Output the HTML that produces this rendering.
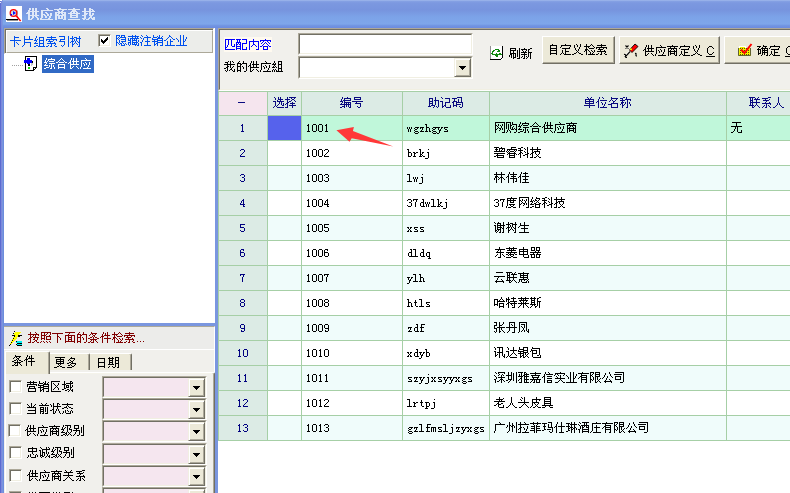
<!DOCTYPE html><html><head><meta charset="utf-8"><style>
*{margin:0;padding:0;box-sizing:border-box}
html,body{width:790px;height:493px;overflow:hidden;background:#f1f0ec;font-family:"Liberation Sans",sans-serif;font-size:12px;color:#000}
.a{position:absolute}
.t{position:absolute;white-space:nowrap;line-height:12px;font-size:12px}
.m{font-family:"Liberation Mono",monospace;font-size:11px;letter-spacing:-0.6px}
.btn{position:absolute;background:#ece9d8;border-top:1px solid #fff;border-left:1px solid #fff;border-right:1px solid #716f64;border-bottom:1px solid #716f64;box-shadow:inset -1px -1px 0 #aca899}
.sunk{position:absolute;border-top:1px solid #aca899;border-left:1px solid #aca899;border-right:1px solid #fff;border-bottom:1px solid #fff}
.sunk>.in{position:absolute;left:0;top:0;right:0;bottom:0;border-top:1px solid #716f64;border-left:1px solid #716f64;border-right:1px solid #f1efe2;border-bottom:1px solid #f1efe2}
.dd{position:absolute;background:#ece9d8;border-top:1px solid #f1efe2;border-left:1px solid #f1efe2;border-right:1px solid #716f64;border-bottom:1px solid #716f64;box-shadow:inset 1px 1px 0 #fff,inset -1px -1px 0 #aca899}
.tri{position:absolute;width:7px;height:4px;background:linear-gradient(#000,#000) 0 0/7px 1px no-repeat,linear-gradient(#000,#000) 1px 1px/5px 1px no-repeat,linear-gradient(#000,#000) 2px 2px/3px 1px no-repeat,linear-gradient(#000,#000) 3px 3px/1px 1px no-repeat}
.cb{position:absolute;width:13px;height:13px;background:#fff;border-top:1px solid #aca899;border-left:1px solid #aca899;border-right:1px solid #fff;border-bottom:1px solid #fff;box-shadow:inset 1px 1px 0 #716f64, inset -1px -1px 0 #f1efe2}
</style></head><body>
<div class="a" style="left:0;top:0;width:790px;height:28px;background:linear-gradient(#a8bfee 0px,#86a2e4 1px,#7c98e0 3px,#7794de 10px,#7ca3e8 17px,#7ea6ea 24px,#7296e2 25.5px,#6c8ade 28px)"></div>
<div class="a" style="left:0;top:28px;width:4px;height:465px;background:linear-gradient(90deg,#5b6bd0 0,#5b6bd0 1px,#7d88dc 1px,#7d88dc 2px,#7896de 2px,#7896de 3px,#6e8cdc 3px)"></div>
<div class="a" style="left:0;top:0;width:3px;height:28px;background:linear-gradient(90deg,#5b6bd0 0,#5b6bd0 1px,#7d88dc 1px,#7d88dc 2px,#7a95df 2px);opacity:0.85"></div>
<div class="a" style="left:0;top:0;width:2px;height:1px;background:#fff"></div><div class="a" style="left:0;top:2px;width:1px;height:1px;background:#e8ecf8"></div>
<div class="a" style="left:6px;top:6px;width:16px;height:16px;background:#fff"></div>
<svg class="a" style="left:6px;top:6px" width="16" height="16"><rect x="0" y="0" width="16" height="16" fill="#fff"/><rect x="0" y="13" width="12" height="1" fill="#000"/><rect x="1" y="14" width="11" height="1" fill="#909090"/><path d="M11 5 L12 4 L12 11 L11 11Z" fill="#b0b8b8"/><circle cx="7.5" cy="7" r="3.3" fill="#d0dde0" stroke="#ff0000" stroke-width="1.3"/><path d="M7 5 L10 7 L7 9Z" fill="#0010ff"/><rect x="4.5" y="8" width="1.5" height="1.5" fill="#0010ff"/><line x1="10.2" y1="9.8" x2="14.6" y2="15" stroke="#ff0000" stroke-width="1.5"/></svg>
<div class="a" style="left:214px;top:28px;width:1px;height:26px;background:#fff"></div>
<div class="a" style="left:4px;top:28px;width:210px;height:26px;background:#ecedea;border-top:1px solid #aca899;border-left:1px solid #aca899;border-right:1px solid #fff;border-bottom:1px solid #fff"><div class="a" style="left:0;top:0;right:0;bottom:0;border-top:1px solid #716f64;border-left:1px solid #716f64;"><div class="a" style="left:0;top:0;right:0;bottom:0;border-top:1px solid #fff;border-left:1px solid #fff;border-right:1px solid #aca899;border-bottom:1px solid #aca899"></div></div></div>
<div class="cb" style="left:98px;top:34px"></div>
<svg class="a" style="left:0;top:0" width="790" height="493" shape-rendering="crispEdges"><path d="M101 39h1v3h-1zM102 40h1v3h-1zM103 41h1v3h-1zM104 40h1v3h-1zM105 39h1v3h-1zM106 38h1v3h-1zM107 37h1v3h-1z" fill="#000"/></svg>
<div class="a" style="left:4px;top:54px;width:211px;height:269px;background:#fff"></div>
<div class="a" style="left:12px;top:65px;width:11px;height:1px;background-image:linear-gradient(90deg,#a0a0a0 1px,transparent 1px);background-size:2px 1px"></div>
<svg class="a" style="left:24px;top:55px" width="14" height="17" shape-rendering="crispEdges"><path d="M1 1h12v11h-1v1h-1v1h-1v1h-1v1H1z" fill="#fff"/><path d="M1 1h12v1H1z M1 1h1v15H1z M12 1h1v11h-1z M1 15h9v1H1z M9 15h1v-1h1v-1h1v-1h1v1h-1v1h-1v1h-1v1H9z M9 12h3v1h-2v2H9z" fill="#000"/><path d="M7 6h1v1h1v3h-1v1H7z" fill="#c8c8c8"/><path d="M0 5h8v3H0z M3 3h3v6H3z" fill="#0000ff"/><path d="M8 6h1v2H8z M4 9h2v2H4z" fill="#000"/><path d="M4 12h2v2H4z" fill="#10e010"/></svg>
<div class="a" style="left:42px;top:55px;width:52px;height:18px;background:#316ac5"></div>
<div class="a" style="left:4px;top:323px;width:211px;height:3px;background:#7a96df"></div>
<div class="a" style="left:215px;top:28px;width:3px;height:465px;background:#7a96df"></div>
<div class="a" style="left:4px;top:326px;width:211px;height:167px;background:#f1f0ec;border-top:1px solid #aca899;border-right:1px solid #fff"></div>
<div class="a" style="left:4px;top:327px;width:210px;height:23px;background:#ececea;border-bottom:1px solid #fff"></div>
<svg class="a" style="left:8px;top:329px" width="16" height="20" shape-rendering="crispEdges"><path d="M7 3h6v1h-6zM6 4h6v1h-6zM6 5h5v1h-5zM6 6h4v1h-4zM6 7h4v1h-4zM5 8h4v1h-4zM5 9h4v1h-4zM4 10h4v1h-4zM4 11h3v1h-3zM3 12h3v1h-3zM3 13h2v1h-2zM2 14h2v1h-2zM2 15h1v1h-1z" fill="#ffff00"/><path d="M6 2h1v1h-1zM5 4h1v1h-1zM4 6h1v1h-1zM5 6h1v1h-1zM6 6h1v1h-1zM6 7h1v1h-1zM5 9h1v1h-1zM4 11h1v1h-1zM3 13h1v1h-1zM2 15h1v1h-1zM1 16h1v1h-1zM10 6h1v1h-1zM11 6h1v1h-1zM12 6h1v1h-1zM13 6h1v1h-1zM10 7h1v1h-1zM11 7h1v1h-1z" fill="#000"/><path d="M8 12h6v2h-6z M8 15h6v1h-6z" fill="#00f0f0"/><path d="M9 14h5v1h-5z M9 16h5v1h-5z M8 12h1v1h-1z M8 15h1v1h-1z" fill="#000"/></svg>
<div class="a" style="left:137px;top:341px;width:1px;height:1px;background:#800000;box-shadow:3px 0 0 #800000,6px 0 0 #800000"></div>
<div class="a" style="left:5px;top:372px;width:210px;height:121px;background:#f1f0ec;border-top:1px solid #fff;border-left:1px solid #fff;border-right:1px solid #716f64;box-shadow:inset -1px 0 0 #aca899,inset 0 1px 0 #f4f3ea;border-top-right-radius:2px"></div>
<div class="a" style="left:50px;top:353px;width:40px;height:17px;background:#ece9d8;border-top:1px solid #fff;border-right:1px solid #716f64;box-shadow:inset -1px 0 0 #aca899;border-top-right-radius:2px"></div>
<div class="a" style="left:90px;top:353px;width:42px;height:17px;background:#ece9d8;border-top:1px solid #fff;border-right:1px solid #716f64;box-shadow:inset -1px 0 0 #aca899;border-top-right-radius:2px"></div>
<div class="a" style="left:5px;top:351px;width:45px;height:23px;background:#ece9d8;border-top:1px solid #fff;border-left:1px solid #fff;border-right:1px solid #716f64;box-shadow:inset -1px 0 0 #aca899;border-top-right-radius:2px"></div>
<div class="cb" style="left:9px;top:380px"></div>
<div class="sunk" style="left:102px;top:376px;width:105px;height:22px;background:#f5e6ef"><div class="in"></div></div>
<div class="dd" style="left:188px;top:378px;width:17px;height:19px"></div>
<div class="tri" style="left:193px;top:386px"></div>
<div class="cb" style="left:9px;top:402px"></div>
<div class="sunk" style="left:102px;top:398px;width:105px;height:22px;background:#f5e6ef"><div class="in"></div></div>
<div class="dd" style="left:188px;top:400px;width:17px;height:19px"></div>
<div class="tri" style="left:193px;top:408px"></div>
<div class="cb" style="left:8px;top:424px"></div>
<div class="sunk" style="left:102px;top:420px;width:105px;height:22px;background:#f5e6ef"><div class="in"></div></div>
<div class="dd" style="left:188px;top:422px;width:17px;height:19px"></div>
<div class="tri" style="left:193px;top:430px"></div>
<div class="cb" style="left:9px;top:446px"></div>
<div class="sunk" style="left:102px;top:443px;width:105px;height:22px;background:#f5e6ef"><div class="in"></div></div>
<div class="dd" style="left:188px;top:445px;width:17px;height:19px"></div>
<div class="tri" style="left:193px;top:453px"></div>
<div class="cb" style="left:9px;top:469px"></div>
<div class="sunk" style="left:102px;top:465px;width:105px;height:22px;background:#f5e6ef"><div class="in"></div></div>
<div class="dd" style="left:188px;top:467px;width:17px;height:19px"></div>
<div class="tri" style="left:193px;top:475px"></div>
<div class="cb" style="left:9px;top:491px"></div>
<div class="sunk" style="left:102px;top:487px;width:105px;height:22px;background:#f5e6ef"><div class="in"></div></div>
<div class="dd" style="left:188px;top:489px;width:17px;height:19px"></div>
<div class="tri" style="left:193px;top:497px"></div>
<div class="a" style="left:218px;top:28px;width:590px;height:63px;background:#f1f0ec;border-top:1px solid #aca899;border-left:1px solid #aca899;border-bottom:1px solid #fff"><div class="a" style="left:0;top:0;right:0;bottom:0;border-top:1px solid #716f64;border-left:1px solid #716f64;border-bottom:1px solid #f1efe2"></div></div>
<div class="a" style="left:224px;top:37px;width:48px;height:15px;background:#fffaf0"></div>
<div class="sunk" style="left:298px;top:33px;width:175px;height:22px;background:#fff"><div class="in"></div></div>
<div class="sunk" style="left:298px;top:56px;width:175px;height:23px;background:#fff"><div class="in"></div></div>
<div class="dd" style="left:454px;top:58px;width:17px;height:19px"></div>
<div class="tri" style="left:459px;top:66px"></div>
<svg class="a" style="left:490px;top:46px" width="13" height="14" shape-rendering="crispEdges"><rect x="0" y="0" width="13" height="14" fill="#fff"/><rect x="0" y="0" width="1" height="14" fill="#909090"/><path d="M12 0h1v12h-1z M0 13h11v1H0z M11 12h1v1h-1z" fill="#000"/><path d="M5 3h1v1h-1zM6 3h1v1h-1zM7 3h1v1h-1zM8 3h1v1h-1zM3 4h1v1h-1zM4 4h1v1h-1zM8 4h1v1h-1zM9 4h1v1h-1zM2 5h1v1h-1zM3 5h1v1h-1zM7 5h1v1h-1zM8 5h1v1h-1zM9 5h1v1h-1zM2 6h1v1h-1zM1 7h1v1h-1zM2 7h1v1h-1zM6 7h1v1h-1zM9 7h1v1h-1zM10 7h1v1h-1zM2 8h1v1h-1zM3 8h1v1h-1zM4 8h1v1h-1zM5 8h1v1h-1zM6 8h1v1h-1zM7 8h1v1h-1zM8 8h1v1h-1zM9 8h1v1h-1zM10 8h1v1h-1zM11 8h1v1h-1zM5 9h1v1h-1zM6 9h1v1h-1zM7 9h1v1h-1zM6 10h1v1h-1zM7 10h1v1h-1z" fill="#108810"/></svg>
<div class="btn" style="left:542px;top:36px;width:73px;height:28px"></div>
<div class="btn" style="left:619px;top:36px;width:101px;height:28px"></div>
<svg class="a" style="left:621px;top:40px" width="20" height="20"><path d="M4.5 5.5 L7.5 8.5 M7.5 5.5 L4.5 8.5" stroke="#000" stroke-width="1.1"/><path d="M9 11.5 L4 17" stroke="#000" stroke-width="1.3"/><path d="M8.2 11 L3.6 16" stroke="#fff" stroke-width="0.8"/><path d="M3 14.5 Q5 14 4.5 16 Q4 17.5 6 17.5" stroke="#000" stroke-width="1.1" fill="none"/><path d="M8.5 10 L14 4 L17 6.5 L11 12.5 Z" fill="#ff0000" stroke="#000" stroke-width="0.9"/><rect x="9" y="8.5" width="2" height="1.6" fill="#f0f000"/><path d="M14 13.5 Q15.5 13 15 14.5 Q14.5 16 16 16" stroke="#000" stroke-width="1.1" fill="none"/></svg>
<svg class="a" style="left:0;top:0" width="790" height="493" shape-rendering="crispEdges"><path d="M709 46h1v1h-1zM710 46h1v1h-1zM711 46h1v1h-1zM708 47h1v1h-1zM712 47h1v1h-1zM707 48h1v1h-1zM713 48h1v1h-1zM707 49h1v1h-1zM707 50h1v1h-1zM707 51h1v1h-1zM707 52h1v1h-1zM713 52h1v1h-1zM708 53h1v1h-1zM712 53h1v1h-1zM709 54h1v1h-1zM710 54h1v1h-1zM711 54h1v1h-1zM706 56h9v1h-9z" fill="#000"/></svg>
<div class="btn" style="left:724px;top:36px;width:80px;height:28px"></div>
<svg class="a" style="left:734px;top:40px" width="20" height="20"><defs><pattern id="chk" width="2" height="2" patternUnits="userSpaceOnUse"><rect width="2" height="2" fill="#f4f400"/><rect width="1" height="1" fill="#505000"/></pattern></defs><rect x="4" y="8" width="13" height="8" fill="url(#chk)"/><path d="M4.5 8 V15.5 H16.5 V8" fill="none" stroke="#606030" stroke-width="1"/><rect x="5" y="6" width="7" height="2" fill="#fff"/><rect x="6" y="7" width="5" height="1" fill="#f0f000"/><path d="M7 9.5 L10.5 13 L17.5 4" stroke="#ff0000" stroke-width="2" fill="none"/></svg>
<svg class="a" style="left:0;top:0" width="790" height="493" shape-rendering="crispEdges"><path d="M788 46h1v1h-1zM789 46h1v1h-1zM790 46h1v1h-1zM787 47h1v1h-1zM791 47h1v1h-1zM786 48h1v1h-1zM792 48h1v1h-1zM786 49h1v1h-1zM786 50h1v1h-1zM786 51h1v1h-1zM786 52h1v1h-1zM792 52h1v1h-1zM787 53h1v1h-1zM791 53h1v1h-1zM788 54h1v1h-1zM789 54h1v1h-1zM790 54h1v1h-1zM785 56h9v1h-9z" fill="#000"/></svg>
<div class="a" style="left:218px;top:91px;width:572px;height:402px;background:#fff"></div>
<div class="a" style="left:218px;top:91px;width:49px;height:25px;background:#f5e5ee"></div>
<div class="a" style="left:267px;top:91px;width:34px;height:25px;background:#dcebe5"></div>
<div class="a" style="left:301px;top:91px;width:101px;height:25px;background:#dcebe5"></div>
<div class="a" style="left:402px;top:91px;width:87px;height:25px;background:#dcebe5"></div>
<div class="a" style="left:489px;top:91px;width:237px;height:25px;background:#dcebe5"></div>
<div class="a" style="left:726px;top:91px;width:84px;height:25px;background:#dcebe5"></div>
<div class="a" style="left:218px;top:115px;width:49px;height:25px;background:#dcebe5"></div>
<div class="a" style="left:267px;top:115px;width:543px;height:25px;background:#c0f7da"></div>
<div class="a" style="left:268px;top:116px;width:33px;height:24px;background:#5662ec"></div>
<div class="a" style="left:218px;top:140px;width:49px;height:25px;background:#dcebe5"></div>
<div class="a" style="left:267px;top:140px;width:543px;height:25px;background:#ffffff"></div>
<div class="a" style="left:218px;top:165px;width:49px;height:25px;background:#dcebe5"></div>
<div class="a" style="left:267px;top:165px;width:543px;height:25px;background:#f0fcfb"></div>
<div class="a" style="left:218px;top:190px;width:49px;height:25px;background:#dcebe5"></div>
<div class="a" style="left:267px;top:190px;width:543px;height:25px;background:#ffffff"></div>
<div class="a" style="left:218px;top:215px;width:49px;height:25px;background:#dcebe5"></div>
<div class="a" style="left:267px;top:215px;width:543px;height:25px;background:#f0fcfb"></div>
<div class="a" style="left:218px;top:240px;width:49px;height:25px;background:#dcebe5"></div>
<div class="a" style="left:267px;top:240px;width:543px;height:25px;background:#ffffff"></div>
<div class="a" style="left:218px;top:265px;width:49px;height:25px;background:#dcebe5"></div>
<div class="a" style="left:267px;top:265px;width:543px;height:25px;background:#f0fcfb"></div>
<div class="a" style="left:218px;top:290px;width:49px;height:25px;background:#dcebe5"></div>
<div class="a" style="left:267px;top:290px;width:543px;height:25px;background:#ffffff"></div>
<div class="a" style="left:218px;top:315px;width:49px;height:25px;background:#dcebe5"></div>
<div class="a" style="left:267px;top:315px;width:543px;height:25px;background:#f0fcfb"></div>
<div class="a" style="left:218px;top:340px;width:49px;height:25px;background:#dcebe5"></div>
<div class="a" style="left:267px;top:340px;width:543px;height:25px;background:#ffffff"></div>
<div class="a" style="left:218px;top:365px;width:49px;height:25px;background:#dcebe5"></div>
<div class="a" style="left:267px;top:365px;width:543px;height:25px;background:#f0fcfb"></div>
<div class="a" style="left:218px;top:390px;width:49px;height:25px;background:#dcebe5"></div>
<div class="a" style="left:267px;top:390px;width:543px;height:25px;background:#ffffff"></div>
<div class="a" style="left:218px;top:415px;width:49px;height:25px;background:#dcebe5"></div>
<div class="a" style="left:267px;top:415px;width:543px;height:25px;background:#f0fcfb"></div>
<div class="a" style="left:218px;top:91px;width:1px;height:350px;background:#a6cfa6"></div>
<div class="a" style="left:267px;top:91px;width:1px;height:350px;background:#a6cfa6"></div>
<div class="a" style="left:301px;top:91px;width:1px;height:350px;background:#a6cfa6"></div>
<div class="a" style="left:402px;top:91px;width:1px;height:350px;background:#a6cfa6"></div>
<div class="a" style="left:489px;top:91px;width:1px;height:350px;background:#a6cfa6"></div>
<div class="a" style="left:726px;top:91px;width:1px;height:350px;background:#a6cfa6"></div>
<div class="a" style="left:218px;top:91px;width:592px;height:1px;background:#a6cfa6"></div>
<div class="a" style="left:218px;top:115px;width:592px;height:1px;background:#a6cfa6"></div>
<div class="a" style="left:218px;top:140px;width:592px;height:1px;background:#a6cfa6"></div>
<div class="a" style="left:218px;top:165px;width:592px;height:1px;background:#a6cfa6"></div>
<div class="a" style="left:218px;top:190px;width:592px;height:1px;background:#a6cfa6"></div>
<div class="a" style="left:218px;top:215px;width:592px;height:1px;background:#a6cfa6"></div>
<div class="a" style="left:218px;top:240px;width:592px;height:1px;background:#a6cfa6"></div>
<div class="a" style="left:218px;top:265px;width:592px;height:1px;background:#a6cfa6"></div>
<div class="a" style="left:218px;top:290px;width:592px;height:1px;background:#a6cfa6"></div>
<div class="a" style="left:218px;top:315px;width:592px;height:1px;background:#a6cfa6"></div>
<div class="a" style="left:218px;top:340px;width:592px;height:1px;background:#a6cfa6"></div>
<div class="a" style="left:218px;top:365px;width:592px;height:1px;background:#a6cfa6"></div>
<div class="a" style="left:218px;top:390px;width:592px;height:1px;background:#a6cfa6"></div>
<div class="a" style="left:218px;top:415px;width:592px;height:1px;background:#a6cfa6"></div>
<div class="a" style="left:218px;top:440px;width:592px;height:1px;background:#a6cfa6"></div>
<div class="a" style="left:238px;top:102px;width:7px;height:1px;background:#0a0a80"></div>
<svg class="a" style="left:0;top:0" width="790" height="493"><path d="M336.4 130.2 L353.9 126.9 L352.9 131.1 L393.3 146.6 L351.7 138.2 L349.5 141.7 Z" fill="#ff3838"/></svg>
<svg class="a" style="left:0;top:0" width="790" height="493" shape-rendering="crispEdges"><defs><path id="g0" d="M3 2h2v1h-2zM6 2h2v1h-2zM9 2h2v1h-2zM3 3h2v1h-2zM6 3h2v1h-2zM9 3h2v1h-2zM2 4h2v1h-2zM6 4h2v1h-2zM9 4h2v1h-2zM2 5h11v1h-11zM1 6h3v1h-3zM6 6h2v1h-2zM9 6h2v1h-2zM0 7h4v1h-4zM6 7h2v1h-2zM9 7h2v1h-2zM2 8h2v1h-2zM6 8h2v1h-2zM9 8h2v1h-2zM2 9h11v1h-11zM2 10h2v1h-2zM6 10h2v1h-2zM9 10h2v1h-2zM2 11h2v1h-2zM6 11h2v1h-2zM10 11h2v1h-2zM2 12h2v1h-2zM5 12h2v1h-2zM11 12h2v1h-2zM2 13h4v1h-4zM11 13h2v1h-2z"/><path id="g1" d="M6 2h2v1h-2zM7 3h2v1h-2zM1 4h12v1h-12zM1 5h2v1h-2zM1 6h2v1h-2zM5 6h2v1h-2zM1 7h2v1h-2zM6 7h2v1h-2zM10 7h2v1h-2zM1 8h4v1h-4zM7 8h2v1h-2zM10 8h2v1h-2zM1 9h2v1h-2zM4 9h2v1h-2zM7 9h2v1h-2zM10 9h2v1h-2zM1 10h2v1h-2zM5 10h2v1h-2zM9 10h2v1h-2zM1 11h2v1h-2zM5 11h2v1h-2zM9 11h2v1h-2zM0 12h2v1h-2zM8 12h2v1h-2zM0 13h13v1h-13z"/><path id="g2" d="M5 2h2v1h-2zM0 3h13v1h-13zM3 4h2v1h-2zM8 4h2v1h-2zM4 5h2v1h-2zM7 5h2v1h-2zM1 6h11v1h-11zM1 7h2v1h-2zM4 7h2v1h-2zM7 7h2v1h-2zM10 7h2v1h-2zM1 8h4v1h-4zM8 8h4v1h-4zM1 9h11v1h-11zM1 10h2v1h-2zM4 10h2v1h-2zM7 10h2v1h-2zM10 10h2v1h-2zM1 11h2v1h-2zM4 11h2v1h-2zM7 11h2v1h-2zM10 11h2v1h-2zM1 12h2v1h-2zM4 12h5v1h-5zM10 12h2v1h-2zM1 13h2v1h-2zM9 13h3v1h-3z"/><path id="g3" d="M5 2h2v1h-2zM0 3h12v1h-12zM4 4h4v1h-4zM3 5h6v1h-6zM2 6h2v1h-2zM5 6h2v1h-2zM8 6h2v1h-2zM0 7h12v1h-12zM2 8h2v1h-2zM8 8h2v1h-2zM2 9h8v1h-8zM2 10h2v1h-2zM8 10h2v1h-2zM2 11h8v1h-8zM0 13h12v1h-12z"/><path id="g4" d="M2 2h2v1h-2zM7 2h2v1h-2zM2 3h2v1h-2zM7 3h4v1h-4zM2 4h2v1h-2zM7 4h2v1h-2zM10 4h2v1h-2zM0 5h13v1h-13zM2 6h2v1h-2zM7 6h2v1h-2zM2 7h4v1h-4zM7 7h2v1h-2zM10 7h2v1h-2zM2 8h3v1h-3zM7 8h2v1h-2zM10 8h2v1h-2zM0 9h4v1h-4zM7 9h4v1h-4zM2 10h2v1h-2zM8 10h2v1h-2zM2 11h2v1h-2zM7 11h3v1h-3zM11 11h2v1h-2zM0 12h4v1h-4zM6 12h2v1h-2zM9 12h4v1h-4zM1 13h2v1h-2zM4 13h3v1h-3zM10 13h3v1h-3z"/><path id="g5" d="M4 2h1v1h-1zM4 3h5v1h-5zM4 4h1v1h-1zM4 5h1v1h-1zM0 6h11v1h-11zM4 7h1v1h-1zM4 8h1v1h-1zM6 8h1v1h-1zM4 9h1v1h-1zM7 9h1v1h-1zM4 10h1v1h-1zM8 10h1v1h-1zM4 11h1v1h-1zM4 12h1v1h-1z"/><path id="g6" d="M2 2h1v1h-1zM7 2h1v1h-1zM2 3h1v1h-1zM7 3h1v1h-1zM2 4h1v1h-1zM7 4h1v1h-1zM2 5h9v1h-9zM2 6h1v1h-1zM2 7h1v1h-1zM2 8h7v1h-7zM2 9h1v1h-1zM8 9h1v1h-1zM2 10h1v1h-1zM8 10h1v1h-1zM1 11h1v1h-1zM8 11h1v1h-1zM0 12h1v1h-1zM8 12h1v1h-1z"/><path id="g7" d="M2 2h1v1h-1zM2 3h1v1h-1zM5 3h5v1h-5zM1 4h1v1h-1zM5 4h1v1h-1zM9 4h1v1h-1zM1 5h1v1h-1zM3 5h1v1h-1zM5 5h1v1h-1zM9 5h1v1h-1zM0 6h3v1h-3zM5 6h5v1h-5zM2 7h1v1h-1zM5 7h1v1h-1zM9 7h1v1h-1zM1 8h1v1h-1zM5 8h1v1h-1zM9 8h1v1h-1zM0 9h4v1h-4zM5 9h5v1h-5zM5 10h1v1h-1zM9 10h1v1h-1zM2 11h2v1h-2zM5 11h1v1h-1zM9 11h1v1h-1zM0 12h2v1h-2zM4 12h7v1h-7z"/><path id="g8" d="M5 2h1v1h-1zM1 3h9v1h-9zM5 4h1v1h-1zM0 5h11v1h-11zM0 6h1v1h-1zM3 6h1v1h-1zM7 6h1v1h-1zM10 6h1v1h-1zM2 7h5v1h-5zM4 8h1v1h-1zM8 8h1v1h-1zM1 9h9v1h-9zM5 10h1v1h-1zM9 10h1v1h-1zM2 11h1v1h-1zM5 11h1v1h-1zM8 11h1v1h-1zM0 12h2v1h-2zM4 12h2v1h-2zM9 12h2v1h-2z"/><path id="g9" d="M1 2h6v1h-6zM10 2h1v1h-1zM6 3h1v1h-1zM10 3h1v1h-1zM6 4h1v1h-1zM10 4h1v1h-1zM2 5h5v1h-5zM10 5h1v1h-1zM2 6h1v1h-1zM10 6h1v1h-1zM1 7h6v1h-6zM10 7h1v1h-1zM6 8h1v1h-1zM10 8h1v1h-1zM6 9h1v1h-1zM10 9h1v1h-1zM6 10h1v1h-1zM10 10h1v1h-1zM3 11h1v1h-1zM5 11h1v1h-1zM10 11h1v1h-1zM4 12h1v1h-1zM10 12h1v1h-1z"/><path id="g10" d="M2 2h1v1h-1zM9 2h1v1h-1zM2 3h1v1h-1zM4 3h3v1h-3zM9 3h1v1h-1zM0 4h4v1h-4zM6 4h5v1h-5zM2 5h1v1h-1zM4 5h1v1h-1zM6 5h1v1h-1zM9 5h1v1h-1zM2 6h1v1h-1zM4 6h1v1h-1zM6 6h1v1h-1zM9 6h1v1h-1zM1 7h3v1h-3zM5 7h1v1h-1zM7 7h1v1h-1zM9 7h1v1h-1zM0 8h1v1h-1zM2 8h1v1h-1zM5 8h1v1h-1zM8 8h2v1h-2zM2 9h1v1h-1zM4 9h1v1h-1zM6 9h1v1h-1zM9 9h1v1h-1zM2 10h2v1h-2zM7 10h1v1h-1zM9 10h1v1h-1zM2 11h1v1h-1zM9 11h1v1h-1zM2 12h1v1h-1zM8 12h2v1h-2z"/><path id="g11" d="M0 2h4v1h-4zM5 2h4v1h-4zM0 3h1v1h-1zM3 3h1v1h-1zM5 3h1v1h-1zM8 3h1v1h-1zM0 4h1v1h-1zM2 4h1v1h-1zM4 4h6v1h-6zM0 5h2v1h-2zM3 5h1v1h-1zM9 5h1v1h-1zM0 6h1v1h-1zM2 6h1v1h-1zM5 6h5v1h-5zM0 7h1v1h-1zM3 7h1v1h-1zM9 7h1v1h-1zM0 8h1v1h-1zM3 8h1v1h-1zM5 8h5v1h-5zM0 9h2v1h-2zM3 9h1v1h-1zM6 9h1v1h-1zM0 10h1v1h-1zM2 10h1v1h-1zM4 10h2v1h-2zM7 10h1v1h-1zM9 10h1v1h-1zM0 11h1v1h-1zM3 11h1v1h-1zM5 11h1v1h-1zM8 11h1v1h-1zM10 11h1v1h-1zM0 12h1v1h-1zM5 12h4v1h-4z"/><path id="g12" d="M4 2h1v1h-1zM7 2h1v1h-1zM0 3h11v1h-11zM4 4h1v1h-1zM7 4h1v1h-1zM9 4h1v1h-1zM0 5h1v1h-1zM2 5h9v1h-9zM0 6h1v1h-1zM2 6h1v1h-1zM4 6h1v1h-1zM6 6h1v1h-1zM8 6h1v1h-1zM0 7h3v1h-3zM4 7h5v1h-5zM10 7h1v1h-1zM2 8h1v1h-1zM4 8h1v1h-1zM8 8h1v1h-1zM10 8h1v1h-1zM0 9h3v1h-3zM4 9h6v1h-6zM0 10h1v1h-1zM2 10h1v1h-1zM4 10h1v1h-1zM6 10h1v1h-1zM8 10h1v1h-1zM10 10h1v1h-1zM0 11h1v1h-1zM2 11h1v1h-1zM4 11h5v1h-5zM10 11h1v1h-1zM1 12h1v1h-1zM7 12h1v1h-1zM9 12h2v1h-2z"/><path id="g13" d="M1 2h1v1h-1zM6 2h1v1h-1zM2 3h1v1h-1zM7 3h1v1h-1zM0 4h1v1h-1zM4 4h7v1h-7zM1 5h1v1h-1zM3 5h1v1h-1zM7 5h1v1h-1zM3 6h1v1h-1zM7 6h1v1h-1zM2 7h1v1h-1zM7 7h1v1h-1zM2 8h1v1h-1zM5 8h5v1h-5zM0 9h2v1h-2zM7 9h1v1h-1zM1 10h1v1h-1zM7 10h1v1h-1zM1 11h1v1h-1zM7 11h1v1h-1zM1 12h1v1h-1zM4 12h7v1h-7z"/><path id="g14" d="M1 2h1v1h-1zM7 2h1v1h-1zM1 3h1v1h-1zM5 3h1v1h-1zM7 3h1v1h-1zM10 3h1v1h-1zM1 4h4v1h-4zM6 4h2v1h-2zM9 4h1v1h-1zM0 5h1v1h-1zM5 5h6v1h-6zM0 6h6v1h-6zM10 6h1v1h-1zM2 7h1v1h-1zM5 7h6v1h-6zM0 8h6v1h-6zM10 8h1v1h-1zM2 9h1v1h-1zM5 9h6v1h-6zM2 10h1v1h-1zM4 10h2v1h-2zM10 10h1v1h-1zM2 11h2v1h-2zM5 11h1v1h-1zM10 11h1v1h-1zM2 12h1v1h-1zM5 12h1v1h-1zM8 12h3v1h-3z"/><path id="g15" d="M5 2h1v1h-1zM5 3h2v1h-2zM4 4h1v1h-1zM7 4h1v1h-1zM3 5h1v1h-1zM8 5h1v1h-1zM2 6h1v1h-1zM6 6h1v1h-1zM9 6h2v1h-2zM0 7h2v1h-2zM6 7h1v1h-1zM3 8h1v1h-1zM6 8h3v1h-3zM3 9h1v1h-1zM6 9h1v1h-1zM3 10h1v1h-1zM6 10h1v1h-1zM3 11h1v1h-1zM6 11h1v1h-1zM1 12h10v1h-10z"/><path id="g16" d="M4 2h1v1h-1zM7 2h1v1h-1zM4 3h1v1h-1zM7 3h1v1h-1zM4 4h1v1h-1zM7 4h1v1h-1zM10 4h1v1h-1zM0 5h1v1h-1zM4 5h1v1h-1zM7 5h1v1h-1zM10 5h1v1h-1zM1 6h1v1h-1zM4 6h1v1h-1zM7 6h1v1h-1zM9 6h1v1h-1zM2 7h1v1h-1zM4 7h1v1h-1zM7 7h1v1h-1zM9 7h1v1h-1zM2 8h1v1h-1zM4 8h1v1h-1zM7 8h2v1h-2zM4 9h1v1h-1zM7 9h1v1h-1zM4 10h1v1h-1zM7 10h1v1h-1zM4 11h1v1h-1zM7 11h1v1h-1zM0 12h11v1h-11z"/><path id="g17" d="M2 2h1v1h-1zM7 2h1v1h-1zM2 3h1v1h-1zM4 3h7v1h-7zM1 4h1v1h-1zM4 4h1v1h-1zM10 4h1v1h-1zM1 5h1v1h-1zM3 5h1v1h-1zM5 5h5v1h-5zM0 6h3v1h-3zM2 7h1v1h-1zM5 7h6v1h-6zM1 8h1v1h-1zM7 8h1v1h-1zM0 9h4v1h-4zM5 9h1v1h-1zM7 9h1v1h-1zM9 9h1v1h-1zM5 10h1v1h-1zM7 10h1v1h-1zM9 10h1v1h-1zM2 11h3v1h-3zM7 11h1v1h-1zM10 11h1v1h-1zM0 12h2v1h-2zM6 12h2v1h-2zM10 12h1v1h-1z"/><path id="g18" d="M5 2h1v1h-1zM4 3h1v1h-1zM6 3h1v1h-1zM3 4h1v1h-1zM7 4h1v1h-1zM2 5h1v1h-1zM8 5h1v1h-1zM0 6h2v1h-2zM3 6h5v1h-5zM9 6h2v1h-2zM2 8h7v1h-7zM2 9h1v1h-1zM8 9h1v1h-1zM2 10h1v1h-1zM8 10h1v1h-1zM2 11h7v1h-7zM2 12h1v1h-1zM8 12h1v1h-1z"/><path id="g19" d="M3 2h1v1h-1zM5 2h1v1h-1zM8 2h1v1h-1zM3 3h1v1h-1zM5 3h1v1h-1zM8 3h1v1h-1zM2 4h1v1h-1zM5 4h1v1h-1zM8 4h1v1h-1zM2 5h1v1h-1zM4 5h7v1h-7zM1 6h2v1h-2zM5 6h1v1h-1zM8 6h1v1h-1zM0 7h1v1h-1zM2 7h1v1h-1zM5 7h1v1h-1zM8 7h1v1h-1zM2 8h9v1h-9zM2 9h1v1h-1zM2 10h1v1h-1zM5 10h1v1h-1zM8 10h1v1h-1zM2 11h1v1h-1zM4 11h1v1h-1zM9 11h1v1h-1zM2 12h2v1h-2zM10 12h1v1h-1z"/><path id="g20" d="M5 2h1v1h-1zM6 3h1v1h-1zM1 4h10v1h-10zM1 5h1v1h-1zM1 6h1v1h-1zM5 6h1v1h-1zM9 6h1v1h-1zM1 7h1v1h-1zM3 7h1v1h-1zM6 7h1v1h-1zM9 7h1v1h-1zM1 8h1v1h-1zM4 8h1v1h-1zM6 8h1v1h-1zM9 8h1v1h-1zM1 9h1v1h-1zM4 9h1v1h-1zM8 9h1v1h-1zM1 10h1v1h-1zM8 10h1v1h-1zM0 11h1v1h-1zM7 11h1v1h-1zM0 12h1v1h-1zM3 12h8v1h-8z"/><path id="g21" d="M2 2h1v1h-1zM7 2h1v1h-1zM2 3h1v1h-1zM8 3h1v1h-1zM0 4h11v1h-11zM2 5h1v1h-1zM5 5h1v1h-1zM7 5h1v1h-1zM10 5h1v1h-1zM2 6h1v1h-1zM4 6h1v1h-1zM7 6h1v1h-1zM2 7h2v1h-2zM5 7h6v1h-6zM1 8h2v1h-2zM6 8h1v1h-1zM9 8h1v1h-1zM0 9h1v1h-1zM2 9h1v1h-1zM5 9h2v1h-2zM9 9h1v1h-1zM2 10h1v1h-1zM7 10h2v1h-2zM2 11h1v1h-1zM6 11h1v1h-1zM8 11h1v1h-1zM0 12h3v1h-3zM4 12h2v1h-2zM9 12h2v1h-2z"/><path id="g22" d="M1 2h10v1h-10zM1 3h1v1h-1zM4 3h1v1h-1zM7 3h1v1h-1zM10 3h1v1h-1zM1 4h1v1h-1zM4 4h1v1h-1zM6 4h1v1h-1zM10 4h1v1h-1zM1 5h5v1h-5zM9 5h1v1h-1zM1 6h1v1h-1zM4 6h1v1h-1zM6 6h5v1h-5zM1 7h1v1h-1zM4 7h1v1h-1zM6 7h1v1h-1zM10 7h1v1h-1zM1 8h4v1h-4zM6 8h1v1h-1zM10 8h1v1h-1zM1 9h1v1h-1zM4 9h1v1h-1zM6 9h5v1h-5zM1 11h1v1h-1zM3 11h1v1h-1zM6 11h1v1h-1zM9 11h1v1h-1zM0 12h1v1h-1zM4 12h1v1h-1zM7 12h1v1h-1zM10 12h1v1h-1z"/><path id="g23" d="M0 3h11v1h-11zM5 4h1v1h-1zM5 5h1v1h-1zM5 6h2v1h-2zM5 7h1v1h-1zM7 7h1v1h-1zM5 8h1v1h-1zM8 8h1v1h-1zM5 9h1v1h-1zM8 9h1v1h-1zM5 10h1v1h-1zM5 11h1v1h-1zM5 12h1v1h-1z"/><path id="g24" d="M1 2h10v1h-10zM5 3h1v1h-1zM4 4h1v1h-1zM1 5h10v1h-10zM1 6h1v1h-1zM4 6h1v1h-1zM7 6h1v1h-1zM10 6h1v1h-1zM1 7h1v1h-1zM4 7h4v1h-4zM10 7h1v1h-1zM1 8h1v1h-1zM4 8h1v1h-1zM7 8h1v1h-1zM10 8h1v1h-1zM1 9h1v1h-1zM4 9h4v1h-4zM10 9h1v1h-1zM1 10h1v1h-1zM4 10h1v1h-1zM7 10h1v1h-1zM10 10h1v1h-1zM1 11h10v1h-10zM1 12h1v1h-1zM10 12h1v1h-1z"/><path id="g25" d="M3 2h1v1h-1zM7 2h1v1h-1zM2 3h1v1h-1zM7 3h1v1h-1zM1 4h4v1h-4zM6 4h5v1h-5zM1 5h1v1h-1zM4 5h2v1h-2zM10 5h1v1h-1zM1 6h1v1h-1zM4 6h1v1h-1zM10 6h1v1h-1zM1 7h4v1h-4zM6 7h1v1h-1zM10 7h1v1h-1zM1 8h1v1h-1zM4 8h1v1h-1zM7 8h1v1h-1zM10 8h1v1h-1zM1 9h1v1h-1zM4 9h1v1h-1zM7 9h1v1h-1zM10 9h1v1h-1zM1 10h1v1h-1zM4 10h1v1h-1zM10 10h1v1h-1zM1 11h4v1h-4zM10 11h1v1h-1zM1 12h1v1h-1zM4 12h1v1h-1zM8 12h2v1h-2z"/><path id="g26" d="M3 2h1v1h-1zM3 3h6v1h-6zM2 4h1v1h-1zM4 4h1v1h-1zM7 4h1v1h-1zM1 5h1v1h-1zM5 5h2v1h-2zM4 6h1v1h-1zM6 6h1v1h-1zM2 7h2v1h-2zM5 7h1v1h-1zM7 7h2v1h-2zM0 8h2v1h-2zM5 8h1v1h-1zM9 8h2v1h-2zM2 9h7v1h-7zM3 10h1v1h-1zM5 10h1v1h-1zM7 10h1v1h-1zM2 11h1v1h-1zM5 11h1v1h-1zM8 11h1v1h-1zM0 12h2v1h-2zM3 12h3v1h-3zM9 12h1v1h-1z"/><path id="g27" d="M3 2h1v1h-1zM7 2h1v1h-1zM3 3h1v1h-1zM5 3h1v1h-1zM7 3h1v1h-1zM2 4h1v1h-1zM5 4h1v1h-1zM7 4h1v1h-1zM2 5h1v1h-1zM4 5h6v1h-6zM1 6h3v1h-3zM7 6h1v1h-1zM0 7h1v1h-1zM2 7h1v1h-1zM7 7h1v1h-1zM2 8h1v1h-1zM4 8h7v1h-7zM2 9h1v1h-1zM7 9h1v1h-1zM2 10h1v1h-1zM7 10h1v1h-1zM2 11h1v1h-1zM7 11h1v1h-1zM2 12h1v1h-1zM7 12h1v1h-1z"/><path id="g28" d="M2 2h1v1h-1zM7 2h1v1h-1zM2 3h1v1h-1zM6 3h1v1h-1zM8 3h1v1h-1zM0 4h6v1h-6zM9 4h1v1h-1zM2 5h1v1h-1zM4 5h1v1h-1zM10 5h1v1h-1zM2 6h1v1h-1zM5 6h5v1h-5zM1 7h3v1h-3zM1 8h2v1h-2zM4 8h1v1h-1zM7 8h1v1h-1zM10 8h1v1h-1zM0 9h1v1h-1zM2 9h1v1h-1zM5 9h1v1h-1zM8 9h1v1h-1zM10 9h1v1h-1zM2 10h1v1h-1zM6 10h1v1h-1zM9 10h1v1h-1zM2 11h1v1h-1zM6 11h1v1h-1zM8 11h1v1h-1zM2 12h1v1h-1zM4 12h7v1h-7z"/><path id="g29" d="M1 2h10v1h-10zM6 3h1v1h-1zM2 4h8v1h-8zM2 5h1v1h-1zM6 5h1v1h-1zM9 5h1v1h-1zM2 6h8v1h-8zM2 7h1v1h-1zM6 7h1v1h-1zM9 7h1v1h-1zM2 8h8v1h-8zM4 9h1v1h-1zM6 9h1v1h-1zM5 10h1v1h-1zM3 11h2v1h-2zM6 11h2v1h-2zM0 12h3v1h-3zM8 12h3v1h-3z"/><path id="g30" d="M5 2h1v1h-1zM4 3h5v1h-5zM3 4h1v1h-1zM8 4h1v1h-1zM2 5h1v1h-1zM4 5h1v1h-1zM7 5h1v1h-1zM5 6h2v1h-2zM3 7h2v1h-2zM6 7h1v1h-1zM1 8h2v1h-2zM5 8h5v1h-5zM4 9h1v1h-1zM9 9h1v1h-1zM2 10h2v1h-2zM5 10h1v1h-1zM8 10h1v1h-1zM6 11h2v1h-2zM1 12h5v1h-5z"/><path id="g31" d="M2 3h7v1h-7zM2 4h1v1h-1zM8 4h1v1h-1zM2 5h1v1h-1zM8 5h1v1h-1zM2 6h1v1h-1zM8 6h1v1h-1zM2 7h7v1h-7zM2 8h1v1h-1zM8 8h1v1h-1zM2 9h1v1h-1zM8 9h1v1h-1zM2 10h1v1h-1zM8 10h1v1h-1zM2 11h7v1h-7zM2 12h1v1h-1zM8 12h1v1h-1z"/><path id="g32" d="M1 2h1v1h-1zM4 2h1v1h-1zM7 2h4v1h-4zM0 3h6v1h-6zM7 3h1v1h-1zM10 3h1v1h-1zM1 4h1v1h-1zM4 4h1v1h-1zM7 4h1v1h-1zM10 4h1v1h-1zM1 5h4v1h-4zM7 5h4v1h-4zM1 6h1v1h-1zM4 6h1v1h-1zM7 6h1v1h-1zM10 6h1v1h-1zM1 7h4v1h-4zM7 7h1v1h-1zM10 7h1v1h-1zM1 8h1v1h-1zM4 8h1v1h-1zM7 8h4v1h-4zM0 9h6v1h-6zM7 9h1v1h-1zM10 9h1v1h-1zM7 10h1v1h-1zM10 10h1v1h-1zM1 11h1v1h-1zM4 11h1v1h-1zM7 11h1v1h-1zM10 11h1v1h-1zM0 12h1v1h-1zM5 12h2v1h-2zM9 12h2v1h-2z"/><path id="g33" d="M4 2h1v1h-1zM7 2h1v1h-1zM1 3h10v1h-10zM4 4h1v1h-1zM7 4h1v1h-1zM1 5h10v1h-10zM1 6h1v1h-1zM10 6h1v1h-1zM1 7h1v1h-1zM3 7h6v1h-6zM3 8h1v1h-1zM8 8h1v1h-1zM2 9h8v1h-8zM2 10h1v1h-1zM9 10h1v1h-1zM2 11h1v1h-1zM9 11h1v1h-1zM2 12h8v1h-8z"/><path id="g34" d="M1 2h9v1h-9zM1 3h1v1h-1zM1 4h1v1h-1zM3 4h1v1h-1zM8 4h1v1h-1zM1 5h1v1h-1zM4 5h1v1h-1zM8 5h1v1h-1zM1 6h1v1h-1zM5 6h1v1h-1zM7 6h1v1h-1zM1 7h1v1h-1zM6 7h1v1h-1zM1 8h1v1h-1zM5 8h1v1h-1zM7 8h1v1h-1zM1 9h1v1h-1zM4 9h1v1h-1zM8 9h1v1h-1zM1 10h1v1h-1zM3 10h1v1h-1zM8 10h1v1h-1zM1 11h1v1h-1zM1 12h10v1h-10z"/><path id="g35" d="M2 2h1v1h-1zM8 2h2v1h-2zM2 3h1v1h-1zM8 3h1v1h-1zM10 3h1v1h-1zM2 4h1v1h-1zM4 4h7v1h-7zM0 5h4v1h-4zM8 5h1v1h-1zM2 6h1v1h-1zM4 6h3v1h-3zM8 6h1v1h-1zM10 6h1v1h-1zM2 7h1v1h-1zM4 7h1v1h-1zM6 7h1v1h-1zM8 7h1v1h-1zM10 7h1v1h-1zM2 8h1v1h-1zM4 8h3v1h-3zM8 8h2v1h-2zM2 9h2v1h-2zM8 9h1v1h-1zM0 10h2v1h-2zM5 10h2v1h-2zM8 10h1v1h-1zM10 10h1v1h-1zM3 11h2v1h-2zM7 11h1v1h-1zM9 11h2v1h-2zM6 12h1v1h-1zM10 12h1v1h-1z"/><path id="g36" d="M5 2h1v1h-1zM1 3h1v1h-1zM5 3h1v1h-1zM9 3h1v1h-1zM2 4h1v1h-1zM5 4h1v1h-1zM8 4h1v1h-1zM3 5h1v1h-1zM5 5h1v1h-1zM7 5h1v1h-1zM1 6h9v1h-9zM9 7h1v1h-1zM9 8h1v1h-1zM2 9h8v1h-8zM9 10h1v1h-1zM9 11h1v1h-1zM1 12h9v1h-9z"/><path id="g37" d="M3 2h1v1h-1zM8 2h1v1h-1zM4 3h1v1h-1zM7 3h1v1h-1zM1 4h10v1h-10zM2 6h4v1h-4zM7 6h1v1h-1zM9 6h1v1h-1zM2 7h1v1h-1zM5 7h1v1h-1zM7 7h1v1h-1zM9 7h1v1h-1zM2 8h4v1h-4zM7 8h1v1h-1zM9 8h1v1h-1zM2 9h1v1h-1zM5 9h1v1h-1zM7 9h1v1h-1zM9 9h1v1h-1zM2 10h4v1h-4zM7 10h1v1h-1zM9 10h1v1h-1zM2 11h1v1h-1zM5 11h1v1h-1zM9 11h1v1h-1zM2 12h1v1h-1zM4 12h2v1h-2zM7 12h3v1h-3z"/><path id="g38" d="M3 2h1v1h-1zM7 2h2v1h-2zM0 3h1v1h-1zM3 3h1v1h-1zM7 3h1v1h-1zM9 3h1v1h-1zM1 4h1v1h-1zM3 4h1v1h-1zM7 4h1v1h-1zM1 5h1v1h-1zM3 5h8v1h-8zM3 6h1v1h-1zM7 6h1v1h-1zM3 7h1v1h-1zM7 7h1v1h-1zM2 8h2v1h-2zM6 8h1v1h-1zM8 8h1v1h-1zM0 9h2v1h-2zM3 9h1v1h-1zM6 9h1v1h-1zM8 9h1v1h-1zM3 10h1v1h-1zM5 10h1v1h-1zM9 10h1v1h-1zM3 11h1v1h-1zM5 11h1v1h-1zM9 11h1v1h-1zM3 12h2v1h-2zM10 12h1v1h-1z"/><path id="g39" d="M5 2h1v1h-1zM0 3h11v1h-11zM5 4h1v1h-1zM4 5h1v1h-1zM6 5h1v1h-1zM2 6h3v1h-3zM7 6h2v1h-2zM0 7h2v1h-2zM5 7h1v1h-1zM9 7h2v1h-2zM3 9h1v1h-1zM5 9h1v1h-1zM9 9h1v1h-1zM1 10h1v1h-1zM3 10h1v1h-1zM6 10h1v1h-1zM8 10h1v1h-1zM10 10h1v1h-1zM1 11h1v1h-1zM3 11h1v1h-1zM8 11h1v1h-1zM10 11h1v1h-1zM0 12h1v1h-1zM4 12h5v1h-5z"/><path id="g40" d="M5 2h1v1h-1zM0 3h11v1h-11zM3 4h1v1h-1zM7 4h1v1h-1zM1 5h9v1h-9zM1 6h1v1h-1zM4 6h1v1h-1zM6 6h1v1h-1zM9 6h1v1h-1zM1 7h1v1h-1zM3 7h1v1h-1zM7 7h1v1h-1zM9 7h1v1h-1zM1 8h9v1h-9zM1 9h1v1h-1zM3 9h1v1h-1zM7 9h1v1h-1zM9 9h1v1h-1zM1 10h1v1h-1zM3 10h5v1h-5zM9 10h1v1h-1zM1 11h1v1h-1zM3 11h1v1h-1zM7 11h1v1h-1zM9 11h1v1h-1zM1 12h1v1h-1zM8 12h2v1h-2z"/><path id="g41" d="M2 2h1v1h-1zM4 2h6v1h-6zM2 3h1v1h-1zM6 3h1v1h-1zM9 3h1v1h-1zM1 4h1v1h-1zM4 4h1v1h-1zM6 4h1v1h-1zM9 4h1v1h-1zM1 5h1v1h-1zM3 5h1v1h-1zM6 5h1v1h-1zM8 5h1v1h-1zM0 6h3v1h-3zM6 6h1v1h-1zM8 6h3v1h-3zM2 7h1v1h-1zM6 7h1v1h-1zM10 7h1v1h-1zM1 8h1v1h-1zM6 8h1v1h-1zM10 8h1v1h-1zM0 9h4v1h-4zM5 9h1v1h-1zM7 9h1v1h-1zM9 9h1v1h-1zM4 10h2v1h-2zM8 10h1v1h-1zM2 11h2v1h-2zM5 11h1v1h-1zM7 11h1v1h-1zM9 11h1v1h-1zM0 12h2v1h-2zM4 12h1v1h-1zM6 12h1v1h-1zM10 12h1v1h-1z"/><path id="g42" d="M1 2h5v1h-5zM10 2h1v1h-1zM1 3h1v1h-1zM5 3h1v1h-1zM10 3h1v1h-1zM1 4h1v1h-1zM5 4h1v1h-1zM8 4h1v1h-1zM10 4h1v1h-1zM1 5h5v1h-5zM8 5h1v1h-1zM10 5h1v1h-1zM3 6h1v1h-1zM8 6h1v1h-1zM10 6h1v1h-1zM0 7h7v1h-7zM8 7h1v1h-1zM10 7h1v1h-1zM3 8h1v1h-1zM6 8h1v1h-1zM8 8h1v1h-1zM10 8h1v1h-1zM2 9h1v1h-1zM6 9h1v1h-1zM8 9h1v1h-1zM10 9h1v1h-1zM2 10h1v1h-1zM6 10h1v1h-1zM10 10h1v1h-1zM1 11h1v1h-1zM6 11h1v1h-1zM10 11h1v1h-1zM0 12h1v1h-1zM4 12h2v1h-2zM8 12h3v1h-3z"/><path id="g43" d="M5 2h1v1h-1zM1 3h9v1h-9zM1 4h1v1h-1zM5 4h1v1h-1zM9 4h1v1h-1zM1 5h1v1h-1zM5 5h1v1h-1zM9 5h1v1h-1zM1 6h9v1h-9zM5 7h1v1h-1zM5 8h1v1h-1zM3 9h1v1h-1zM6 9h1v1h-1zM9 9h1v1h-1zM1 10h1v1h-1zM3 10h1v1h-1zM8 10h1v1h-1zM10 10h1v1h-1zM1 11h1v1h-1zM3 11h1v1h-1zM8 11h1v1h-1zM10 11h1v1h-1zM0 12h1v1h-1zM4 12h5v1h-5z"/><path id="g44" d="M1 2h1v1h-1zM7 2h1v1h-1zM9 2h1v1h-1zM2 3h1v1h-1zM7 3h1v1h-1zM10 3h1v1h-1zM3 4h8v1h-8zM0 5h2v1h-2zM3 5h1v1h-1zM7 5h1v1h-1zM1 6h1v1h-1zM3 6h1v1h-1zM7 6h1v1h-1zM1 7h1v1h-1zM3 7h3v1h-3zM7 7h1v1h-1zM9 7h1v1h-1zM1 8h1v1h-1zM3 8h1v1h-1zM5 8h1v1h-1zM7 8h1v1h-1zM9 8h1v1h-1zM1 9h1v1h-1zM3 9h1v1h-1zM5 9h1v1h-1zM8 9h1v1h-1zM1 10h3v1h-3zM5 10h1v1h-1zM8 10h1v1h-1zM10 10h1v1h-1zM1 11h1v1h-1zM3 11h2v1h-2zM7 11h1v1h-1zM9 11h2v1h-2zM2 12h1v1h-1zM6 12h1v1h-1zM10 12h1v1h-1z"/><path id="g45" d="M2 2h1v1h-1zM8 2h1v1h-1zM3 3h1v1h-1zM7 3h1v1h-1zM1 4h9v1h-9zM5 5h1v1h-1zM5 6h1v1h-1zM0 7h10v1h-10zM5 8h1v1h-1zM4 9h1v1h-1zM6 9h1v1h-1zM3 10h1v1h-1zM7 10h1v1h-1zM2 11h1v1h-1zM8 11h1v1h-1zM0 12h2v1h-2zM9 12h2v1h-2z"/><path id="g46" d="M7 2h3v1h-3zM1 3h6v1h-6zM4 4h1v1h-1zM8 4h1v1h-1zM2 5h6v1h-6zM5 6h1v1h-1zM4 7h1v1h-1zM8 7h1v1h-1zM1 8h9v1h-9zM5 9h1v1h-1zM9 9h1v1h-1zM3 10h1v1h-1zM5 10h1v1h-1zM7 10h1v1h-1zM2 11h1v1h-1zM5 11h1v1h-1zM8 11h1v1h-1zM1 12h1v1h-1zM4 12h2v1h-2zM9 12h1v1h-1z"/><path id="g47" d="M2 2h1v1h-1zM5 2h1v1h-1zM8 2h1v1h-1zM2 3h1v1h-1zM5 3h1v1h-1zM9 3h1v1h-1zM1 4h1v1h-1zM5 4h1v1h-1zM1 5h10v1h-10zM4 6h1v1h-1zM4 7h5v1h-5zM4 8h1v1h-1zM8 8h1v1h-1zM3 9h1v1h-1zM5 9h1v1h-1zM7 9h1v1h-1zM2 10h1v1h-1zM6 10h1v1h-1zM1 11h1v1h-1zM5 11h1v1h-1zM7 11h2v1h-2zM0 12h1v1h-1zM3 12h2v1h-2zM9 12h2v1h-2z"/><path id="g48" d="M0 2h11v1h-11zM4 3h1v1h-1zM6 3h1v1h-1zM1 4h9v1h-9zM1 5h1v1h-1zM4 5h1v1h-1zM6 5h1v1h-1zM9 5h1v1h-1zM1 6h9v1h-9zM2 8h7v1h-7zM0 10h11v1h-11zM2 11h1v1h-1zM5 11h1v1h-1zM8 11h1v1h-1zM0 12h2v1h-2zM4 12h2v1h-2zM9 12h2v1h-2z"/><path id="g49" d="M2 2h1v1h-1zM5 2h1v1h-1zM8 2h1v1h-1zM3 3h1v1h-1zM5 3h1v1h-1zM7 3h1v1h-1zM0 4h11v1h-11zM3 5h1v1h-1zM5 5h1v1h-1zM7 5h1v1h-1zM2 6h1v1h-1zM5 6h1v1h-1zM8 6h1v1h-1zM1 7h1v1h-1zM9 7h1v1h-1zM5 8h1v1h-1zM0 9h11v1h-11zM4 10h1v1h-1zM6 10h1v1h-1zM3 11h1v1h-1zM7 11h1v1h-1zM0 12h3v1h-3zM8 12h3v1h-3z"/><path id="g50" d="M1 2h6v1h-6zM9 2h1v1h-1zM2 3h1v1h-1zM4 3h1v1h-1zM7 3h1v1h-1zM9 3h1v1h-1zM2 4h1v1h-1zM4 4h1v1h-1zM7 4h1v1h-1zM9 4h1v1h-1zM0 5h8v1h-8zM9 5h1v1h-1zM2 6h1v1h-1zM4 6h1v1h-1zM7 6h1v1h-1zM9 6h1v1h-1zM2 7h1v1h-1zM4 7h1v1h-1zM9 7h1v1h-1zM1 8h1v1h-1zM4 8h2v1h-2zM8 8h2v1h-2zM5 9h1v1h-1zM2 10h7v1h-7zM5 11h1v1h-1zM0 12h11v1h-11z"/><path id="g51" d="M1 2h10v1h-10zM1 3h1v1h-1zM4 3h1v1h-1zM7 3h1v1h-1zM1 4h1v1h-1zM4 4h1v1h-1zM7 4h1v1h-1zM1 5h1v1h-1zM4 5h1v1h-1zM7 5h1v1h-1zM1 6h1v1h-1zM4 6h1v1h-1zM7 6h1v1h-1zM1 7h1v1h-1zM4 7h1v1h-1zM7 7h1v1h-1zM10 7h1v1h-1zM1 8h1v1h-1zM3 8h1v1h-1zM7 8h1v1h-1zM10 8h1v1h-1zM1 9h1v1h-1zM3 9h1v1h-1zM8 9h3v1h-3zM1 10h2v1h-2zM1 11h1v1h-1zM1 12h10v1h-10z"/><path id="g52" d="M0 2h5v1h-5zM6 2h5v1h-5zM1 3h1v1h-1zM3 3h1v1h-1zM10 3h1v1h-1zM1 4h1v1h-1zM3 4h1v1h-1zM10 4h1v1h-1zM0 5h5v1h-5zM10 5h1v1h-1zM0 6h1v1h-1zM2 6h1v1h-1zM4 6h1v1h-1zM6 6h5v1h-5zM0 7h2v1h-2zM3 7h2v1h-2zM6 7h1v1h-1zM0 8h1v1h-1zM4 8h1v1h-1zM6 8h1v1h-1zM0 9h5v1h-5zM6 9h1v1h-1zM0 10h1v1h-1zM4 10h1v1h-1zM6 10h1v1h-1zM10 10h1v1h-1zM0 11h5v1h-5zM6 11h1v1h-1zM10 11h1v1h-1zM0 12h1v1h-1zM4 12h1v1h-1zM6 12h5v1h-5z"/><path id="g53" d="M5 2h1v1h-1zM5 3h1v1h-1zM1 4h10v1h-10zM1 5h1v1h-1zM5 5h1v1h-1zM10 5h1v1h-1zM1 6h1v1h-1zM5 6h1v1h-1zM10 6h1v1h-1zM1 7h1v1h-1zM5 7h2v1h-2zM10 7h1v1h-1zM1 8h1v1h-1zM4 8h1v1h-1zM7 8h1v1h-1zM10 8h1v1h-1zM1 9h1v1h-1zM3 9h1v1h-1zM8 9h1v1h-1zM10 9h1v1h-1zM1 10h1v1h-1zM10 10h1v1h-1zM1 11h1v1h-1zM10 11h1v1h-1zM1 12h1v1h-1zM8 12h3v1h-3z"/><path id="g54" d="M5 2h1v1h-1zM0 3h11v1h-11zM0 4h1v1h-1zM3 4h1v1h-1zM7 4h1v1h-1zM10 4h1v1h-1zM2 5h1v1h-1zM5 5h1v1h-1zM8 5h1v1h-1zM1 6h1v1h-1zM4 6h1v1h-1zM6 6h1v1h-1zM9 6h1v1h-1zM3 7h1v1h-1zM7 7h1v1h-1zM2 8h1v1h-1zM8 8h1v1h-1zM0 9h2v1h-2zM3 9h5v1h-5zM9 9h2v1h-2zM3 10h1v1h-1zM7 10h1v1h-1zM3 11h1v1h-1zM7 11h1v1h-1zM3 12h5v1h-5z"/><path id="g55" d="M4 2h1v1h-1zM6 2h1v1h-1zM8 2h1v1h-1zM1 3h3v1h-3zM6 3h1v1h-1zM9 3h1v1h-1zM3 4h1v1h-1zM6 4h1v1h-1zM0 5h11v1h-11zM3 6h1v1h-1zM6 6h1v1h-1zM3 7h2v1h-2zM6 7h1v1h-1zM9 7h1v1h-1zM2 8h2v1h-2zM6 8h1v1h-1zM8 8h1v1h-1zM0 9h2v1h-2zM3 9h1v1h-1zM7 9h1v1h-1zM3 10h1v1h-1zM6 10h2v1h-2zM10 10h1v1h-1zM1 11h1v1h-1zM3 11h1v1h-1zM5 11h1v1h-1zM8 11h1v1h-1zM10 11h1v1h-1zM2 12h1v1h-1zM9 12h2v1h-2z"/><path id="g56" d="M2 2h1v1h-1zM6 2h4v1h-4zM2 3h1v1h-1zM6 3h1v1h-1zM9 3h1v1h-1zM1 4h1v1h-1zM3 4h1v1h-1zM6 4h1v1h-1zM9 4h1v1h-1zM0 5h4v1h-4zM6 5h4v1h-4zM2 6h1v1h-1zM6 6h1v1h-1zM9 6h1v1h-1zM1 7h1v1h-1zM3 7h1v1h-1zM6 7h1v1h-1zM9 7h1v1h-1zM0 8h3v1h-3zM4 8h1v1h-1zM6 8h1v1h-1zM9 8h1v1h-1zM6 9h4v1h-4zM1 10h1v1h-1zM3 10h1v1h-1zM6 10h1v1h-1zM9 10h1v1h-1zM0 11h1v1h-1zM2 11h1v1h-1zM4 11h1v1h-1zM6 11h1v1h-1zM9 11h1v1h-1zM0 12h1v1h-1zM2 12h1v1h-1zM4 12h7v1h-7z"/><path id="g57" d="M1 2h6v1h-6zM10 2h1v1h-1zM1 3h1v1h-1zM6 3h1v1h-1zM10 3h1v1h-1zM1 4h6v1h-6zM8 4h1v1h-1zM10 4h1v1h-1zM1 5h1v1h-1zM4 5h1v1h-1zM8 5h1v1h-1zM10 5h1v1h-1zM1 6h1v1h-1zM4 6h1v1h-1zM8 6h1v1h-1zM10 6h1v1h-1zM1 7h6v1h-6zM8 7h1v1h-1zM10 7h1v1h-1zM1 8h2v1h-2zM4 8h1v1h-1zM6 8h1v1h-1zM8 8h1v1h-1zM10 8h1v1h-1zM0 9h1v1h-1zM2 9h1v1h-1zM4 9h1v1h-1zM6 9h1v1h-1zM8 9h1v1h-1zM10 9h1v1h-1zM0 10h1v1h-1zM2 10h1v1h-1zM4 10h1v1h-1zM6 10h1v1h-1zM8 10h1v1h-1zM10 10h1v1h-1zM2 11h1v1h-1zM4 11h3v1h-3zM10 11h1v1h-1zM4 12h1v1h-1zM8 12h3v1h-3z"/><path id="g58" d="M3 2h1v1h-1zM9 2h2v1h-2zM0 3h6v1h-6zM7 3h2v1h-2zM1 4h1v1h-1zM5 4h1v1h-1zM7 4h1v1h-1zM2 5h1v1h-1zM4 5h1v1h-1zM7 5h1v1h-1zM0 6h6v1h-6zM7 6h4v1h-4zM3 7h1v1h-1zM7 7h1v1h-1zM9 7h1v1h-1zM0 8h6v1h-6zM7 8h1v1h-1zM9 8h1v1h-1zM3 9h1v1h-1zM7 9h1v1h-1zM9 9h1v1h-1zM1 10h1v1h-1zM3 10h1v1h-1zM5 10h1v1h-1zM7 10h1v1h-1zM9 10h1v1h-1zM0 11h1v1h-1zM3 11h1v1h-1zM6 11h1v1h-1zM9 11h1v1h-1zM2 12h2v1h-2zM5 12h1v1h-1zM9 12h1v1h-1z"/><path id="g59" d="M4 2h1v1h-1zM2 3h7v1h-7zM2 4h1v1h-1zM8 4h1v1h-1zM2 5h1v1h-1zM8 5h1v1h-1zM2 6h7v1h-7zM2 7h1v1h-1zM8 7h1v1h-1zM2 8h7v1h-7zM2 9h1v1h-1zM8 9h1v1h-1zM2 10h1v1h-1zM8 10h1v1h-1zM2 11h7v1h-7zM2 12h1v1h-1zM8 12h1v1h-1z"/><path id="g60" d="M5 2h1v1h-1zM1 3h10v1h-10zM1 4h1v1h-1zM10 4h1v1h-1zM0 5h1v1h-1zM9 5h1v1h-1zM2 6h8v1h-8zM5 7h1v1h-1zM2 8h1v1h-1zM5 8h1v1h-1zM2 9h1v1h-1zM5 9h4v1h-4zM2 10h1v1h-1zM5 10h1v1h-1zM1 11h1v1h-1zM3 11h1v1h-1zM5 11h1v1h-1zM0 12h1v1h-1zM4 12h7v1h-7z"/><path id="g61" d="M4 2h1v1h-1zM8 2h1v1h-1zM2 3h1v1h-1zM5 3h1v1h-1zM8 3h1v1h-1zM2 4h1v1h-1zM5 4h1v1h-1zM8 4h1v1h-1zM2 5h1v1h-1zM7 5h1v1h-1zM3 6h1v1h-1zM7 6h1v1h-1zM3 7h1v1h-1zM6 7h1v1h-1zM4 8h1v1h-1zM6 8h1v1h-1zM5 9h1v1h-1zM4 10h1v1h-1zM6 10h1v1h-1zM2 11h2v1h-2zM7 11h2v1h-2zM0 12h2v1h-2zM9 12h2v1h-2z"/><path id="g62" d="M6 2h1v1h-1zM0 3h4v1h-4zM6 3h4v1h-4zM2 4h1v1h-1zM5 4h1v1h-1zM8 4h1v1h-1zM1 5h1v1h-1zM4 5h7v1h-7zM0 6h4v1h-4zM5 6h1v1h-1zM7 6h1v1h-1zM10 6h1v1h-1zM1 7h1v1h-1zM3 7h1v1h-1zM5 7h6v1h-6zM1 8h1v1h-1zM3 8h1v1h-1zM5 8h1v1h-1zM7 8h1v1h-1zM10 8h1v1h-1zM1 9h1v1h-1zM3 9h1v1h-1zM5 9h6v1h-6zM1 10h3v1h-3zM5 10h1v1h-1zM7 10h1v1h-1zM10 10h1v1h-1zM1 11h1v1h-1zM5 11h1v1h-1zM7 11h1v1h-1zM10 11h1v1h-1zM4 12h1v1h-1zM9 12h2v1h-2z"/><path id="g63" d="M1 2h1v1h-1zM5 2h1v1h-1zM7 2h1v1h-1zM2 3h1v1h-1zM5 3h1v1h-1zM7 3h1v1h-1zM2 4h1v1h-1zM5 4h5v1h-5zM4 5h1v1h-1zM7 5h1v1h-1zM0 6h3v1h-3zM4 6h7v1h-7zM2 7h1v1h-1zM6 7h1v1h-1zM8 7h1v1h-1zM2 8h1v1h-1zM6 8h1v1h-1zM8 8h1v1h-1zM10 8h1v1h-1zM2 9h1v1h-1zM5 9h1v1h-1zM8 9h1v1h-1zM10 9h1v1h-1zM2 10h1v1h-1zM4 10h1v1h-1zM9 10h2v1h-2zM1 11h1v1h-1zM3 11h1v1h-1zM0 12h1v1h-1zM4 12h7v1h-7z"/><path id="g64" d="M2 2h1v1h-1zM4 2h7v1h-7zM2 3h1v1h-1zM6 3h1v1h-1zM9 3h1v1h-1zM0 4h5v1h-5zM7 4h2v1h-2zM2 5h1v1h-1zM6 5h1v1h-1zM9 5h1v1h-1zM2 6h1v1h-1zM4 6h2v1h-2zM10 6h1v1h-1zM2 7h2v1h-2zM7 7h1v1h-1zM1 8h2v1h-2zM5 8h5v1h-5zM0 9h1v1h-1zM2 9h1v1h-1zM7 9h1v1h-1zM2 10h1v1h-1zM4 10h7v1h-7zM2 11h1v1h-1zM7 11h1v1h-1zM0 12h3v1h-3zM7 12h1v1h-1z"/><path id="g65" d="M2 2h1v1h-1zM7 2h1v1h-1zM2 3h1v1h-1zM4 3h7v1h-7zM1 4h1v1h-1zM4 4h1v1h-1zM10 4h1v1h-1zM1 5h1v1h-1zM3 5h8v1h-8zM0 6h3v1h-3zM4 6h1v1h-1zM2 7h1v1h-1zM4 7h7v1h-7zM1 8h1v1h-1zM4 8h1v1h-1zM6 8h1v1h-1zM8 8h1v1h-1zM10 8h1v1h-1zM0 9h11v1h-11zM4 10h1v1h-1zM6 10h1v1h-1zM8 10h1v1h-1zM10 10h1v1h-1zM2 11h3v1h-3zM6 11h1v1h-1zM8 11h1v1h-1zM10 11h1v1h-1zM0 12h2v1h-2zM4 12h1v1h-1zM9 12h2v1h-2z"/><path id="g66" d="M2 2h7v1h-7zM2 3h1v1h-1zM8 3h1v1h-1zM2 4h7v1h-7zM0 6h11v1h-11zM4 7h1v1h-1zM3 8h6v1h-6zM8 9h1v1h-1zM8 10h1v1h-1zM5 11h1v1h-1zM8 11h1v1h-1zM6 12h2v1h-2z"/><path id="g67" d="M7 2h1v1h-1zM1 3h4v1h-4zM7 3h1v1h-1zM1 4h1v1h-1zM4 4h1v1h-1zM7 4h1v1h-1zM1 5h1v1h-1zM4 5h1v1h-1zM6 5h5v1h-5zM1 6h4v1h-4zM7 6h1v1h-1zM10 6h1v1h-1zM1 7h1v1h-1zM4 7h1v1h-1zM7 7h1v1h-1zM10 7h1v1h-1zM1 8h4v1h-4zM7 8h1v1h-1zM10 8h1v1h-1zM1 9h1v1h-1zM4 9h1v1h-1zM7 9h1v1h-1zM10 9h1v1h-1zM1 10h1v1h-1zM3 10h4v1h-4zM10 10h1v1h-1zM0 11h3v1h-3zM6 11h1v1h-1zM8 11h1v1h-1zM10 11h1v1h-1zM5 12h1v1h-1zM9 12h1v1h-1z"/><path id="g68" d="M1 2h1v1h-1zM2 3h1v1h-1zM5 3h5v1h-5zM9 4h1v1h-1zM9 5h1v1h-1zM0 6h3v1h-3zM9 6h1v1h-1zM2 7h1v1h-1zM5 7h5v1h-5zM2 8h1v1h-1zM5 8h1v1h-1zM2 9h1v1h-1zM5 9h1v1h-1zM2 10h1v1h-1zM4 10h2v1h-2zM10 10h1v1h-1zM2 11h2v1h-2zM5 11h1v1h-1zM10 11h1v1h-1zM2 12h1v1h-1zM6 12h5v1h-5z"/><path id="g69" d="M5 2h5v1h-5zM0 3h5v1h-5zM9 3h1v1h-1zM2 4h1v1h-1zM6 4h1v1h-1zM9 4h1v1h-1zM2 5h1v1h-1zM6 5h1v1h-1zM9 5h1v1h-1zM1 6h4v1h-4zM6 6h1v1h-1zM9 6h1v1h-1zM0 7h2v1h-2zM4 7h7v1h-7zM1 8h1v1h-1zM4 8h1v1h-1zM10 8h1v1h-1zM1 9h1v1h-1zM4 9h5v1h-5zM10 9h1v1h-1zM1 10h4v1h-4zM10 10h1v1h-1zM1 11h1v1h-1zM4 11h1v1h-1zM7 11h1v1h-1zM10 11h1v1h-1zM8 12h2v1h-2z"/><path id="g70" d="M3 2h1v1h-1zM7 2h1v1h-1zM4 3h1v1h-1zM6 3h1v1h-1zM1 4h9v1h-9zM1 5h1v1h-1zM5 5h1v1h-1zM9 5h1v1h-1zM1 6h9v1h-9zM1 7h1v1h-1zM5 7h1v1h-1zM9 7h1v1h-1zM1 8h9v1h-9zM5 9h1v1h-1zM0 10h11v1h-11zM5 11h1v1h-1zM5 12h1v1h-1z"/><path id="g71" d="M3 2h1v1h-1zM6 2h1v1h-1zM3 3h1v1h-1zM7 3h1v1h-1zM2 4h1v1h-1zM2 5h1v1h-1zM4 5h7v1h-7zM1 6h2v1h-2zM0 7h1v1h-1zM2 7h1v1h-1zM5 7h1v1h-1zM9 7h1v1h-1zM2 8h1v1h-1zM6 8h1v1h-1zM9 8h1v1h-1zM2 9h1v1h-1zM6 9h1v1h-1zM8 9h1v1h-1zM2 10h1v1h-1zM8 10h1v1h-1zM2 11h1v1h-1zM7 11h1v1h-1zM2 12h1v1h-1zM4 12h7v1h-7z"/><path id="g72" d="M3 2h1v1h-1zM3 3h7v1h-7zM3 4h1v1h-1zM8 4h1v1h-1zM2 5h1v1h-1zM4 5h1v1h-1zM7 5h1v1h-1zM1 6h1v1h-1zM5 6h2v1h-2zM5 7h1v1h-1zM3 8h7v1h-7zM0 9h4v1h-4zM9 9h1v1h-1zM3 10h1v1h-1zM9 10h1v1h-1zM3 11h1v1h-1zM9 11h1v1h-1zM3 12h7v1h-7z"/><path id="g73" d="M3 2h2v1h-2zM6 2h1v1h-1zM0 3h3v1h-3zM6 3h1v1h-1zM2 4h1v1h-1zM5 4h6v1h-6zM0 5h5v1h-5zM7 5h1v1h-1zM10 5h1v1h-1zM2 6h1v1h-1zM7 6h1v1h-1zM1 7h3v1h-3zM5 7h1v1h-1zM7 7h1v1h-1zM9 7h1v1h-1zM1 8h2v1h-2zM5 8h1v1h-1zM7 8h1v1h-1zM9 8h1v1h-1zM0 9h1v1h-1zM2 9h1v1h-1zM4 9h1v1h-1zM7 9h1v1h-1zM10 9h1v1h-1zM2 10h2v1h-2zM7 10h1v1h-1zM10 10h1v1h-1zM2 11h1v1h-1zM7 11h1v1h-1zM2 12h1v1h-1zM6 12h2v1h-2z"/><path id="g74" d="M0 2h6v1h-6zM9 2h1v1h-1zM1 3h1v1h-1zM3 3h1v1h-1zM6 3h1v1h-1zM8 3h1v1h-1zM1 4h1v1h-1zM3 4h1v1h-1zM5 4h6v1h-6zM1 5h3v1h-3zM7 5h1v1h-1zM1 6h1v1h-1zM3 6h1v1h-1zM7 6h1v1h-1zM1 7h10v1h-10zM1 8h1v1h-1zM3 8h1v1h-1zM7 8h1v1h-1zM1 9h1v1h-1zM3 9h1v1h-1zM7 9h1v1h-1zM0 10h5v1h-5zM6 10h1v1h-1zM8 10h1v1h-1zM3 11h1v1h-1zM5 11h1v1h-1zM9 11h1v1h-1zM3 12h2v1h-2zM10 12h1v1h-1z"/><path id="g75" d="M5 2h1v1h-1zM5 3h1v1h-1zM5 4h1v1h-1zM5 5h1v1h-1zM5 6h1v1h-1zM5 7h1v1h-1zM4 8h1v1h-1zM6 8h1v1h-1zM4 9h1v1h-1zM6 9h1v1h-1zM3 10h1v1h-1zM7 10h1v1h-1zM2 11h1v1h-1zM8 11h1v1h-1zM0 12h2v1h-2zM9 12h2v1h-2z"/><path id="g76" d="M2 4h1v1h-1zM1 5h2v1h-2zM2 6h1v1h-1zM2 7h1v1h-1zM2 8h1v1h-1zM2 9h1v1h-1zM2 10h1v1h-1zM1 11h3v1h-3z"/><path id="g77" d="M1 4h3v1h-3zM0 5h1v1h-1zM4 5h1v1h-1zM0 6h1v1h-1zM4 6h1v1h-1zM0 7h1v1h-1zM4 7h1v1h-1zM0 8h1v1h-1zM4 8h1v1h-1zM0 9h1v1h-1zM4 9h1v1h-1zM0 10h1v1h-1zM4 10h1v1h-1zM1 11h3v1h-3z"/><path id="g78" d="M0 7h1v1h-1zM2 7h1v1h-1zM4 7h1v1h-1zM0 8h1v1h-1zM2 8h1v1h-1zM4 8h1v1h-1zM1 9h1v1h-1zM3 9h1v1h-1zM1 10h1v1h-1zM3 10h1v1h-1zM1 11h1v1h-1zM3 11h1v1h-1z"/><path id="g79" d="M2 7h4v1h-4zM1 8h1v1h-1zM4 8h1v1h-1zM2 9h2v1h-2zM1 10h1v1h-1zM2 11h3v1h-3zM1 12h1v1h-1zM5 12h1v1h-1zM2 13h3v1h-3z"/><path id="g80" d="M1 7h4v1h-4zM1 8h1v1h-1zM3 8h1v1h-1zM3 9h1v1h-1zM2 10h1v1h-1zM1 11h4v1h-4z"/><path id="g81" d="M0 4h2v1h-2zM1 5h1v1h-1zM1 6h1v1h-1zM1 7h3v1h-3zM1 8h1v1h-1zM4 8h1v1h-1zM1 9h1v1h-1zM4 9h1v1h-1zM1 10h1v1h-1zM4 10h1v1h-1zM0 11h3v1h-3zM4 11h2v1h-2z"/><path id="g82" d="M0 7h3v1h-3zM4 7h2v1h-2zM1 8h1v1h-1zM4 8h1v1h-1zM1 9h1v1h-1zM3 9h1v1h-1zM2 10h2v1h-2zM2 11h1v1h-1zM2 12h1v1h-1zM0 13h2v1h-2z"/><path id="g83" d="M1 7h4v1h-4zM1 8h1v1h-1zM2 9h2v1h-2zM4 10h1v1h-1zM1 11h4v1h-4z"/><path id="g84" d="M1 2h10v1h-10zM1 3h1v1h-1zM10 3h1v1h-1zM1 4h1v1h-1zM4 4h1v1h-1zM8 4h1v1h-1zM10 4h1v1h-1zM1 5h2v1h-2zM4 5h1v1h-1zM6 5h1v1h-1zM8 5h1v1h-1zM10 5h1v1h-1zM1 6h1v1h-1zM3 6h1v1h-1zM7 6h1v1h-1zM10 6h1v1h-1zM1 7h1v1h-1zM4 7h1v1h-1zM7 7h1v1h-1zM10 7h1v1h-1zM1 8h1v1h-1zM3 8h1v1h-1zM5 8h2v1h-2zM8 8h1v1h-1zM10 8h1v1h-1zM1 9h2v1h-2zM6 9h1v1h-1zM8 9h1v1h-1zM10 9h1v1h-1zM1 10h1v1h-1zM5 10h1v1h-1zM10 10h1v1h-1zM1 11h1v1h-1zM10 11h1v1h-1zM1 12h1v1h-1zM8 12h3v1h-3z"/><path id="g85" d="M0 2h5v1h-5zM6 2h1v1h-1zM0 3h1v1h-1zM4 3h1v1h-1zM6 3h1v1h-1zM0 4h1v1h-1zM2 4h1v1h-1zM4 4h1v1h-1zM6 4h5v1h-5zM0 5h1v1h-1zM2 5h1v1h-1zM4 5h2v1h-2zM10 5h1v1h-1zM0 6h1v1h-1zM2 6h1v1h-1zM4 6h1v1h-1zM7 6h1v1h-1zM10 6h1v1h-1zM0 7h1v1h-1zM2 7h1v1h-1zM4 7h1v1h-1zM6 7h1v1h-1zM10 7h1v1h-1zM0 8h1v1h-1zM2 8h1v1h-1zM4 8h1v1h-1zM6 8h1v1h-1zM8 8h1v1h-1zM10 8h1v1h-1zM2 9h1v1h-1zM5 9h3v1h-3zM9 9h2v1h-2zM1 10h1v1h-1zM3 10h1v1h-1zM10 10h1v1h-1zM1 11h1v1h-1zM4 11h1v1h-1zM10 11h1v1h-1zM0 12h1v1h-1zM4 12h1v1h-1zM8 12h2v1h-2z"/><path id="g86" d="M1 2h9v1h-9zM5 3h1v1h-1zM5 4h1v1h-1zM5 5h1v1h-1zM0 6h11v1h-11zM4 7h1v1h-1zM6 7h1v1h-1zM4 8h1v1h-1zM6 8h1v1h-1zM3 9h1v1h-1zM6 9h1v1h-1zM3 10h1v1h-1zM6 10h1v1h-1zM10 10h1v1h-1zM2 11h1v1h-1zM6 11h1v1h-1zM10 11h1v1h-1zM0 12h2v1h-2zM7 12h4v1h-4z"/><path id="g87" d="M1 4h3v1h-3zM0 5h1v1h-1zM4 5h1v1h-1zM4 6h1v1h-1zM3 7h1v1h-1zM2 8h1v1h-1zM1 9h1v1h-1zM0 10h1v1h-1zM0 11h5v1h-5z"/><path id="g88" d="M0 4h2v1h-2zM1 5h1v1h-1zM1 6h1v1h-1zM1 7h3v1h-3zM1 8h1v1h-1zM4 8h1v1h-1zM1 9h1v1h-1zM4 9h1v1h-1zM1 10h1v1h-1zM4 10h1v1h-1zM1 11h3v1h-3z"/><path id="g89" d="M0 7h2v1h-2zM3 7h2v1h-2zM1 8h2v1h-2zM1 9h1v1h-1zM1 10h1v1h-1zM0 11h3v1h-3z"/><path id="g90" d="M0 4h2v1h-2zM1 5h1v1h-1zM1 6h1v1h-1zM1 7h1v1h-1zM3 7h2v1h-2zM1 8h1v1h-1zM3 8h1v1h-1zM1 9h2v1h-2zM1 10h1v1h-1zM3 10h1v1h-1zM0 11h3v1h-3zM4 11h2v1h-2z"/><path id="g91" d="M3 4h1v1h-1zM2 7h2v1h-2zM3 8h1v1h-1zM3 9h1v1h-1zM3 10h1v1h-1zM3 11h1v1h-1zM3 12h1v1h-1zM0 13h3v1h-3z"/><path id="g92" d="M0 2h5v1h-5zM7 2h1v1h-1zM2 3h1v1h-1zM5 3h6v1h-6zM1 4h3v1h-3zM5 4h1v1h-1zM8 4h1v1h-1zM10 4h1v1h-1zM2 5h1v1h-1zM5 5h1v1h-1zM7 5h1v1h-1zM10 5h1v1h-1zM0 6h11v1h-11zM0 8h11v1h-11zM3 9h1v1h-1zM2 10h8v1h-8zM0 11h2v1h-2zM3 11h1v1h-1zM9 11h1v1h-1zM3 12h7v1h-7z"/><path id="g93" d="M5 2h5v1h-5zM5 3h1v1h-1zM1 4h10v1h-10zM1 5h1v1h-1zM3 5h1v1h-1zM8 5h1v1h-1zM10 5h1v1h-1zM0 6h1v1h-1zM2 6h1v1h-1zM4 6h4v1h-4zM9 6h1v1h-1zM1 7h1v1h-1zM3 7h1v1h-1zM8 7h1v1h-1zM2 8h8v1h-8zM1 9h1v1h-1zM3 9h1v1h-1zM8 9h1v1h-1zM10 9h1v1h-1zM3 10h6v1h-6zM3 11h1v1h-1zM8 11h1v1h-1zM3 12h6v1h-6z"/><path id="g94" d="M3 2h2v1h-2zM9 2h1v1h-1zM0 3h3v1h-3zM6 3h1v1h-1zM9 3h1v1h-1zM2 4h1v1h-1zM7 4h1v1h-1zM9 4h1v1h-1zM0 5h5v1h-5zM9 5h1v1h-1zM2 6h1v1h-1zM6 6h1v1h-1zM9 6h1v1h-1zM2 7h2v1h-2zM7 7h1v1h-1zM9 7h1v1h-1zM1 8h2v1h-2zM4 8h1v1h-1zM9 8h2v1h-2zM0 9h1v1h-1zM2 9h1v1h-1zM7 9h3v1h-3zM2 10h1v1h-1zM5 10h2v1h-2zM9 10h1v1h-1zM2 11h1v1h-1zM9 11h1v1h-1zM2 12h1v1h-1zM9 12h1v1h-1z"/><path id="g95" d="M2 2h1v1h-1zM7 2h1v1h-1zM2 3h1v1h-1zM7 3h1v1h-1zM0 4h11v1h-11zM2 5h1v1h-1zM7 5h1v1h-1zM2 6h1v1h-1zM4 6h6v1h-6zM2 7h2v1h-2zM5 7h1v1h-1zM9 7h1v1h-1zM1 8h2v1h-2zM5 8h1v1h-1zM9 8h1v1h-1zM0 9h1v1h-1zM2 9h1v1h-1zM6 9h1v1h-1zM8 9h1v1h-1zM2 10h1v1h-1zM7 10h1v1h-1zM2 11h1v1h-1zM6 11h1v1h-1zM8 11h1v1h-1zM0 12h3v1h-3zM4 12h2v1h-2zM9 12h2v1h-2z"/><path id="g96" d="M1 4h3v1h-3zM0 5h1v1h-1zM4 5h1v1h-1zM4 6h1v1h-1zM2 7h2v1h-2zM4 8h1v1h-1zM4 9h1v1h-1zM0 10h1v1h-1zM4 10h1v1h-1zM1 11h3v1h-3z"/><path id="g97" d="M0 4h3v1h-3zM2 5h1v1h-1zM2 6h1v1h-1zM2 7h1v1h-1zM2 8h1v1h-1zM2 9h1v1h-1zM2 10h1v1h-1zM0 11h5v1h-5z"/><path id="g98" d="M2 2h1v1h-1zM7 2h1v1h-1zM2 3h1v1h-1zM7 3h1v1h-1zM0 4h11v1h-11zM2 5h1v1h-1zM7 5h1v1h-1zM1 6h3v1h-3zM7 6h1v1h-1zM1 7h2v1h-2zM4 7h1v1h-1zM6 7h3v1h-3zM0 8h1v1h-1zM2 8h1v1h-1zM5 8h1v1h-1zM7 8h1v1h-1zM9 8h1v1h-1zM0 9h1v1h-1zM2 9h1v1h-1zM4 9h1v1h-1zM7 9h1v1h-1zM10 9h1v1h-1zM2 10h1v1h-1zM7 10h1v1h-1zM2 11h1v1h-1zM7 11h1v1h-1zM2 12h1v1h-1zM7 12h1v1h-1z"/><path id="g99" d="M3 2h1v1h-1zM7 2h1v1h-1zM3 3h1v1h-1zM7 3h1v1h-1zM2 4h1v1h-1zM4 4h7v1h-7zM2 5h1v1h-1zM7 5h1v1h-1zM1 6h2v1h-2zM5 6h5v1h-5zM0 7h1v1h-1zM2 7h1v1h-1zM7 7h1v1h-1zM2 8h1v1h-1zM4 8h7v1h-7zM2 9h1v1h-1zM7 9h1v1h-1zM10 9h1v1h-1zM2 10h1v1h-1zM7 10h1v1h-1zM10 10h1v1h-1zM2 11h1v1h-1zM7 11h1v1h-1zM9 11h2v1h-2zM2 12h1v1h-1zM7 12h1v1h-1z"/><path id="g100" d="M3 2h1v1h-1zM7 2h1v1h-1zM3 3h1v1h-1zM5 3h5v1h-5zM2 4h1v1h-1zM7 4h1v1h-1zM2 5h1v1h-1zM7 5h1v1h-1zM1 6h2v1h-2zM4 6h7v1h-7zM0 7h1v1h-1zM2 7h1v1h-1zM7 7h1v1h-1zM2 8h1v1h-1zM7 8h1v1h-1zM2 9h1v1h-1zM5 9h5v1h-5zM2 10h1v1h-1zM7 10h1v1h-1zM2 11h1v1h-1zM7 11h1v1h-1zM2 12h1v1h-1zM4 12h7v1h-7z"/><path id="g101" d="M3 4h1v1h-1zM2 5h2v1h-2zM1 6h1v1h-1zM3 6h1v1h-1zM1 7h1v1h-1zM3 7h1v1h-1zM0 8h1v1h-1zM3 8h1v1h-1zM0 9h5v1h-5zM3 10h1v1h-1zM3 11h2v1h-2z"/><path id="g102" d="M0 4h5v1h-5zM0 5h1v1h-1zM3 5h1v1h-1zM3 6h1v1h-1zM2 7h1v1h-1zM2 8h1v1h-1zM2 9h1v1h-1zM2 10h1v1h-1zM2 11h1v1h-1z"/><path id="g103" d="M3 4h2v1h-2zM4 5h1v1h-1zM4 6h1v1h-1zM2 7h3v1h-3zM1 8h1v1h-1zM4 8h1v1h-1zM1 9h1v1h-1zM4 9h1v1h-1zM1 10h1v1h-1zM4 10h1v1h-1zM2 11h4v1h-4z"/><path id="g104" d="M5 2h1v1h-1zM1 3h10v1h-10zM1 4h1v1h-1zM4 4h1v1h-1zM7 4h1v1h-1zM1 5h9v1h-9zM1 6h1v1h-1zM4 6h1v1h-1zM7 6h1v1h-1zM1 7h1v1h-1zM4 7h4v1h-4zM1 8h1v1h-1zM1 9h1v1h-1zM3 9h6v1h-6zM1 10h1v1h-1zM4 10h1v1h-1zM7 10h1v1h-1zM0 11h1v1h-1zM5 11h2v1h-2zM0 12h1v1h-1zM2 12h3v1h-3zM7 12h3v1h-3z"/><path id="g105" d="M2 2h1v1h-1zM6 2h1v1h-1zM2 3h1v1h-1zM6 3h4v1h-4zM1 4h1v1h-1zM5 4h1v1h-1zM9 4h1v1h-1zM1 5h1v1h-1zM3 5h1v1h-1zM5 5h2v1h-2zM8 5h1v1h-1zM0 6h3v1h-3zM4 6h1v1h-1zM7 6h1v1h-1zM2 7h1v1h-1zM6 7h1v1h-1zM8 7h1v1h-1zM1 8h1v1h-1zM4 8h2v1h-2zM9 8h2v1h-2zM0 9h4v1h-4zM5 9h5v1h-5zM5 10h1v1h-1zM9 10h1v1h-1zM2 11h2v1h-2zM5 11h1v1h-1zM9 11h1v1h-1zM0 12h2v1h-2zM5 12h5v1h-5z"/><path id="g106" d="M0 4h5v1h-5zM0 5h1v1h-1zM0 6h1v1h-1zM0 7h4v1h-4zM4 8h1v1h-1zM4 9h1v1h-1zM0 10h1v1h-1zM4 10h1v1h-1zM1 11h3v1h-3z"/><path id="g107" d="M0 7h2v1h-2zM3 7h2v1h-2zM1 8h1v1h-1zM3 8h1v1h-1zM2 9h1v1h-1zM1 10h1v1h-1zM3 10h1v1h-1zM0 11h2v1h-2zM3 11h2v1h-2z"/><path id="g108" d="M0 2h1v1h-1zM4 2h1v1h-1zM9 2h1v1h-1zM1 3h1v1h-1zM3 3h4v1h-4zM9 3h1v1h-1zM3 4h1v1h-1zM6 4h1v1h-1zM9 4h1v1h-1zM0 5h2v1h-2zM3 5h8v1h-8zM1 6h1v1h-1zM3 6h1v1h-1zM6 6h1v1h-1zM9 6h1v1h-1zM1 7h1v1h-1zM3 7h5v1h-5zM9 7h1v1h-1zM1 8h1v1h-1zM3 8h1v1h-1zM6 8h1v1h-1zM8 8h2v1h-2zM1 9h1v1h-1zM3 9h4v1h-4zM9 9h1v1h-1zM1 10h2v1h-2zM4 10h1v1h-1zM6 10h1v1h-1zM9 10h1v1h-1zM1 11h1v1h-1zM3 11h1v1h-1zM6 11h1v1h-1zM9 11h1v1h-1zM2 12h1v1h-1zM5 12h2v1h-2zM8 12h2v1h-2z"/><path id="g109" d="M6 2h1v1h-1zM2 3h1v1h-1zM6 3h1v1h-1zM2 4h1v1h-1zM6 4h1v1h-1zM2 5h9v1h-9zM1 6h1v1h-1zM6 6h1v1h-1zM0 7h1v1h-1zM6 7h1v1h-1zM3 8h7v1h-7zM6 9h1v1h-1zM6 10h1v1h-1zM6 11h1v1h-1zM1 12h10v1h-10z"/><path id="g110" d="M1 4h3v1h-3zM0 5h1v1h-1zM3 5h1v1h-1zM0 6h1v1h-1zM0 7h4v1h-4zM0 8h1v1h-1zM4 8h1v1h-1zM0 9h1v1h-1zM4 9h1v1h-1zM0 10h1v1h-1zM4 10h1v1h-1zM1 11h3v1h-3z"/><path id="g111" d="M2 7h3v1h-3zM1 8h1v1h-1zM4 8h1v1h-1zM1 9h1v1h-1zM4 9h1v1h-1zM1 10h1v1h-1zM4 10h1v1h-1zM2 11h3v1h-3zM4 12h1v1h-1zM3 13h3v1h-3z"/><path id="g112" d="M5 2h1v1h-1zM5 3h1v1h-1zM1 4h10v1h-10zM4 5h1v1h-1zM6 5h1v1h-1zM3 6h1v1h-1zM6 6h1v1h-1zM2 7h8v1h-8zM6 8h1v1h-1zM3 9h1v1h-1zM6 9h1v1h-1zM8 9h1v1h-1zM2 10h1v1h-1zM6 10h1v1h-1zM9 10h1v1h-1zM1 11h1v1h-1zM6 11h1v1h-1zM10 11h1v1h-1zM4 12h3v1h-3z"/><path id="g113" d="M3 2h1v1h-1zM7 2h1v1h-1zM0 3h11v1h-11zM3 4h1v1h-1zM5 4h1v1h-1zM7 4h1v1h-1zM1 5h9v1h-9zM5 6h1v1h-1zM0 7h11v1h-11zM2 8h1v1h-1zM4 8h1v1h-1zM8 8h1v1h-1zM0 9h2v1h-2zM3 9h5v1h-5zM9 9h2v1h-2zM2 10h1v1h-1zM4 10h1v1h-1zM7 10h1v1h-1zM5 11h2v1h-2zM0 12h5v1h-5zM7 12h4v1h-4z"/><path id="g114" d="M5 2h1v1h-1zM5 3h1v1h-1zM1 4h9v1h-9zM1 5h1v1h-1zM5 5h1v1h-1zM9 5h1v1h-1zM1 6h9v1h-9zM1 7h1v1h-1zM5 7h1v1h-1zM9 7h1v1h-1zM1 8h1v1h-1zM5 8h1v1h-1zM9 8h1v1h-1zM1 9h9v1h-9zM5 10h1v1h-1zM10 10h1v1h-1zM5 11h1v1h-1zM10 11h1v1h-1zM6 12h5v1h-5z"/><path id="g115" d="M1 2h4v1h-4zM6 2h4v1h-4zM1 3h1v1h-1zM4 3h1v1h-1zM6 3h1v1h-1zM9 3h1v1h-1zM1 4h1v1h-1zM4 4h1v1h-1zM6 4h1v1h-1zM9 4h1v1h-1zM1 5h4v1h-4zM6 5h4v1h-4zM5 6h1v1h-1zM8 6h1v1h-1zM0 7h11v1h-11zM3 8h1v1h-1zM7 8h1v1h-1zM0 9h5v1h-5zM6 9h5v1h-5zM1 10h1v1h-1zM4 10h1v1h-1zM6 10h1v1h-1zM9 10h1v1h-1zM1 11h1v1h-1zM4 11h1v1h-1zM6 11h1v1h-1zM9 11h1v1h-1zM1 12h4v1h-4zM6 12h4v1h-4z"/><path id="g116" d="M2 2h7v1h-7zM0 6h11v1h-11zM4 7h1v1h-1zM3 8h1v1h-1zM3 9h1v1h-1zM7 9h1v1h-1zM2 10h1v1h-1zM8 10h1v1h-1zM1 11h9v1h-9zM2 12h1v1h-1zM9 12h1v1h-1z"/><path id="g117" d="M5 2h1v1h-1zM0 3h11v1h-11zM2 4h1v1h-1zM5 4h1v1h-1zM9 4h1v1h-1zM2 5h8v1h-8zM2 6h1v1h-1zM5 6h1v1h-1zM9 6h1v1h-1zM2 7h8v1h-8zM5 8h1v1h-1zM9 8h1v1h-1zM1 9h8v1h-8zM10 9h1v1h-1zM1 10h1v1h-1zM3 10h1v1h-1zM6 10h1v1h-1zM9 10h1v1h-1zM1 11h1v1h-1zM3 11h1v1h-1zM8 11h1v1h-1zM10 11h1v1h-1zM0 12h1v1h-1zM4 12h5v1h-5zM10 12h1v1h-1z"/><path id="g118" d="M1 4h3v1h-3zM0 5h1v1h-1zM4 5h1v1h-1zM0 6h1v1h-1zM4 6h1v1h-1zM1 7h3v1h-3zM0 8h1v1h-1zM4 8h1v1h-1zM0 9h1v1h-1zM4 9h1v1h-1zM0 10h1v1h-1zM4 10h1v1h-1zM1 11h3v1h-3z"/><path id="g119" d="M2 5h1v1h-1zM2 6h1v1h-1zM1 7h3v1h-3zM2 8h1v1h-1zM2 9h1v1h-1zM2 10h1v1h-1zM3 11h2v1h-2z"/><path id="g120" d="M7 2h1v1h-1zM7 3h1v1h-1zM0 4h4v1h-4zM6 4h1v1h-1zM8 4h1v1h-1zM0 5h1v1h-1zM3 5h1v1h-1zM5 5h1v1h-1zM9 5h1v1h-1zM0 6h1v1h-1zM3 6h8v1h-8zM0 7h1v1h-1zM3 7h1v1h-1zM0 8h1v1h-1zM3 8h1v1h-1zM5 8h5v1h-5zM0 9h4v1h-4zM5 9h1v1h-1zM9 9h1v1h-1zM0 10h1v1h-1zM3 10h1v1h-1zM5 10h1v1h-1zM9 10h1v1h-1zM5 11h5v1h-5zM5 12h1v1h-1zM9 12h1v1h-1z"/><path id="g121" d="M2 2h1v1h-1zM7 2h1v1h-1zM0 3h1v1h-1zM2 3h1v1h-1zM5 3h5v1h-5zM0 4h4v1h-4zM7 4h1v1h-1zM0 5h1v1h-1zM2 5h1v1h-1zM7 5h1v1h-1zM0 6h1v1h-1zM2 6h1v1h-1zM4 6h7v1h-7zM2 7h2v1h-2zM8 7h1v1h-1zM1 8h2v1h-2zM4 8h7v1h-7zM0 9h1v1h-1zM2 9h1v1h-1zM5 9h1v1h-1zM8 9h1v1h-1zM2 10h1v1h-1zM6 10h1v1h-1zM8 10h1v1h-1zM2 11h1v1h-1zM8 11h1v1h-1zM2 12h1v1h-1zM6 12h3v1h-3z"/><path id="g122" d="M3 2h1v1h-1zM7 2h1v1h-1zM0 3h11v1h-11zM3 4h1v1h-1zM5 4h1v1h-1zM7 4h1v1h-1zM1 5h9v1h-9zM2 6h1v1h-1zM5 6h1v1h-1zM8 6h1v1h-1zM3 7h1v1h-1zM5 7h1v1h-1zM7 7h1v1h-1zM0 8h11v1h-11zM3 9h1v1h-1zM5 9h1v1h-1zM7 9h1v1h-1zM2 10h1v1h-1zM5 10h1v1h-1zM8 10h1v1h-1zM1 11h1v1h-1zM5 11h1v1h-1zM9 11h1v1h-1zM0 12h1v1h-1zM5 12h1v1h-1zM10 12h1v1h-1z"/><path id="g123" d="M1 2h1v1h-1zM4 2h1v1h-1zM9 2h2v1h-2zM0 3h6v1h-6zM7 3h2v1h-2zM1 4h1v1h-1zM4 4h1v1h-1zM7 4h1v1h-1zM1 5h4v1h-4zM7 5h1v1h-1zM1 6h1v1h-1zM4 6h1v1h-1zM7 6h4v1h-4zM1 7h4v1h-4zM7 7h1v1h-1zM9 7h1v1h-1zM1 8h1v1h-1zM4 8h1v1h-1zM7 8h1v1h-1zM9 8h1v1h-1zM0 9h6v1h-6zM7 9h1v1h-1zM9 9h1v1h-1zM2 10h1v1h-1zM4 10h1v1h-1zM7 10h1v1h-1zM9 10h1v1h-1zM1 11h1v1h-1zM5 11h2v1h-2zM9 11h1v1h-1zM0 12h1v1h-1zM5 12h1v1h-1zM9 12h1v1h-1z"/><path id="g124" d="M1 4h3v1h-3zM0 5h1v1h-1zM4 5h1v1h-1zM0 6h1v1h-1zM4 6h1v1h-1zM0 7h1v1h-1zM4 7h1v1h-1zM1 8h4v1h-4zM4 9h1v1h-1zM1 10h1v1h-1zM4 10h1v1h-1zM1 11h3v1h-3z"/><path id="g125" d="M2 4h4v1h-4zM2 5h1v1h-1zM2 6h1v1h-1zM1 7h4v1h-4zM2 8h1v1h-1zM2 9h1v1h-1zM2 10h1v1h-1zM1 11h4v1h-4z"/><path id="g126" d="M0 2h3v1h-3zM5 2h1v1h-1zM9 2h1v1h-1zM2 3h1v1h-1zM5 3h1v1h-1zM9 3h1v1h-1zM2 4h1v1h-1zM5 4h1v1h-1zM8 4h1v1h-1zM0 5h3v1h-3zM5 5h3v1h-3zM0 6h1v1h-1zM5 6h1v1h-1zM0 7h1v1h-1zM3 7h8v1h-8zM0 8h3v1h-3zM5 8h1v1h-1zM7 8h1v1h-1zM2 9h1v1h-1zM5 9h1v1h-1zM7 9h1v1h-1zM2 10h1v1h-1zM5 10h1v1h-1zM8 10h1v1h-1zM0 11h1v1h-1zM2 11h1v1h-1zM5 11h2v1h-2zM9 11h1v1h-1zM1 12h1v1h-1zM5 12h1v1h-1zM10 12h1v1h-1z"/><path id="g127" d="M3 2h6v1h-6zM3 3h1v1h-1zM8 3h1v1h-1zM3 4h1v1h-1zM5 4h1v1h-1zM8 4h1v1h-1zM3 5h1v1h-1zM6 5h1v1h-1zM8 5h1v1h-1zM3 6h1v1h-1zM8 6h1v1h-1zM0 7h11v1h-11zM3 8h1v1h-1zM8 8h1v1h-1zM3 9h1v1h-1zM8 9h1v1h-1zM3 10h1v1h-1zM8 10h1v1h-1zM2 11h1v1h-1zM8 11h1v1h-1zM1 12h1v1h-1zM6 12h3v1h-3z"/><path id="g128" d="M1 2h8v1h-8zM1 3h1v1h-1zM8 3h1v1h-1zM1 4h1v1h-1zM3 4h4v1h-4zM8 4h1v1h-1zM1 5h1v1h-1zM6 5h1v1h-1zM8 5h1v1h-1zM1 6h1v1h-1zM3 6h1v1h-1zM6 6h1v1h-1zM8 6h1v1h-1zM1 7h1v1h-1zM4 7h1v1h-1zM6 7h1v1h-1zM8 7h1v1h-1zM1 8h1v1h-1zM5 8h1v1h-1zM8 8h1v1h-1zM1 9h1v1h-1zM5 9h1v1h-1zM8 9h1v1h-1zM10 9h1v1h-1zM1 10h1v1h-1zM4 10h1v1h-1zM6 10h1v1h-1zM8 10h1v1h-1zM10 10h1v1h-1zM1 11h1v1h-1zM3 11h1v1h-1zM6 11h1v1h-1zM9 11h2v1h-2zM0 12h1v1h-1zM10 12h1v1h-1z"/><path id="g129" d="M0 2h1v1h-1zM3 2h6v1h-6zM1 3h1v1h-1zM5 3h1v1h-1zM8 3h1v1h-1zM1 4h1v1h-1zM5 4h1v1h-1zM8 4h1v1h-1zM5 5h1v1h-1zM8 5h1v1h-1zM0 6h2v1h-2zM5 6h1v1h-1zM8 6h1v1h-1zM1 7h1v1h-1zM3 7h6v1h-6zM1 8h1v1h-1zM5 8h1v1h-1zM8 8h1v1h-1zM1 9h1v1h-1zM3 9h1v1h-1zM5 9h1v1h-1zM8 9h1v1h-1zM10 9h1v1h-1zM1 10h2v1h-2zM5 10h1v1h-1zM8 10h1v1h-1zM10 10h1v1h-1zM1 11h1v1h-1zM5 11h1v1h-1zM9 11h2v1h-2zM5 12h1v1h-1zM10 12h1v1h-1z"/><path id="g130" d="M1 2h1v1h-1zM7 2h1v1h-1zM2 3h1v1h-1zM7 3h1v1h-1zM2 4h1v1h-1zM7 4h1v1h-1zM4 5h7v1h-7zM0 6h3v1h-3zM7 6h1v1h-1zM2 7h1v1h-1zM7 7h1v1h-1zM2 8h1v1h-1zM6 8h1v1h-1zM8 8h1v1h-1zM2 9h1v1h-1zM5 9h1v1h-1zM9 9h1v1h-1zM2 10h1v1h-1zM4 10h1v1h-1zM10 10h1v1h-1zM1 11h1v1h-1zM3 11h1v1h-1zM0 12h1v1h-1zM4 12h7v1h-7z"/><path id="g131" d="M1 2h1v1h-1zM5 2h5v1h-5zM1 3h1v1h-1zM5 3h1v1h-1zM9 3h1v1h-1zM1 4h5v1h-5zM9 4h1v1h-1zM0 5h1v1h-1zM5 5h5v1h-5zM0 6h6v1h-6zM9 6h1v1h-1zM2 7h1v1h-1zM5 7h5v1h-5zM0 8h6v1h-6zM7 8h1v1h-1zM10 8h1v1h-1zM2 9h1v1h-1zM5 9h1v1h-1zM7 9h1v1h-1zM9 9h1v1h-1zM2 10h1v1h-1zM4 10h2v1h-2zM8 10h1v1h-1zM2 11h2v1h-2zM5 11h1v1h-1zM7 11h1v1h-1zM9 11h1v1h-1zM2 12h1v1h-1zM5 12h2v1h-2zM10 12h1v1h-1z"/><path id="g132" d="M2 2h1v1h-1zM2 3h8v1h-8zM1 4h1v1h-1zM9 4h1v1h-1zM1 5h6v1h-6zM9 5h1v1h-1zM0 6h1v1h-1zM2 6h1v1h-1zM6 6h1v1h-1zM9 6h1v1h-1zM2 7h1v1h-1zM6 7h1v1h-1zM9 7h1v1h-1zM2 8h5v1h-5zM9 8h1v1h-1zM2 9h1v1h-1zM9 9h1v1h-1zM2 10h1v1h-1zM7 10h2v1h-2zM10 10h1v1h-1zM2 11h1v1h-1zM10 11h1v1h-1zM3 12h8v1h-8z"/><path id="g133" d="M1 2h1v1h-1zM4 2h7v1h-7zM2 3h1v1h-1zM4 3h1v1h-1zM10 3h1v1h-1zM5 4h1v1h-1zM8 4h1v1h-1zM0 5h1v1h-1zM4 5h1v1h-1zM7 5h1v1h-1zM9 5h1v1h-1zM1 6h1v1h-1zM7 6h1v1h-1zM2 7h1v1h-1zM4 7h7v1h-7zM2 8h1v1h-1zM7 8h1v1h-1zM0 9h2v1h-2zM6 9h3v1h-3zM1 10h1v1h-1zM5 10h1v1h-1zM7 10h1v1h-1zM9 10h1v1h-1zM1 11h1v1h-1zM3 11h2v1h-2zM7 11h1v1h-1zM10 11h1v1h-1zM1 12h1v1h-1zM7 12h1v1h-1z"/><path id="g134" d="M2 2h1v1h-1zM5 2h1v1h-1zM10 2h1v1h-1zM2 3h1v1h-1zM5 3h1v1h-1zM7 3h1v1h-1zM10 3h1v1h-1zM2 4h1v1h-1zM5 4h1v1h-1zM7 4h1v1h-1zM10 4h1v1h-1zM0 5h6v1h-6zM7 5h1v1h-1zM10 5h1v1h-1zM2 6h1v1h-1zM5 6h1v1h-1zM7 6h1v1h-1zM10 6h1v1h-1zM2 7h1v1h-1zM5 7h1v1h-1zM7 7h1v1h-1zM10 7h1v1h-1zM2 8h1v1h-1zM5 8h1v1h-1zM7 8h1v1h-1zM10 8h1v1h-1zM2 9h4v1h-4zM7 9h1v1h-1zM10 9h1v1h-1zM0 10h2v1h-2zM4 10h1v1h-1zM7 10h1v1h-1zM10 10h1v1h-1zM3 11h1v1h-1zM10 11h1v1h-1zM2 12h1v1h-1zM10 12h1v1h-1z"/><path id="g135" d="M0 2h5v1h-5zM6 2h2v1h-2zM3 3h1v1h-1zM6 3h1v1h-1zM8 3h1v1h-1zM1 4h1v1h-1zM3 4h1v1h-1zM6 4h5v1h-5zM1 5h1v1h-1zM3 5h1v1h-1zM5 5h2v1h-2zM8 5h1v1h-1zM0 6h5v1h-5zM6 6h5v1h-5zM3 7h1v1h-1zM6 7h1v1h-1zM8 7h1v1h-1zM2 8h2v1h-2zM6 8h1v1h-1zM8 8h1v1h-1zM1 9h1v1h-1zM3 9h1v1h-1zM6 9h5v1h-5zM0 10h1v1h-1zM3 10h1v1h-1zM6 10h1v1h-1zM8 10h1v1h-1zM3 11h1v1h-1zM6 11h1v1h-1zM8 11h1v1h-1zM1 12h3v1h-3zM6 12h5v1h-5z"/><path id="g136" d="M5 2h1v1h-1zM0 3h11v1h-11zM5 4h1v1h-1zM1 5h9v1h-9zM2 6h1v1h-1zM8 6h1v1h-1zM2 7h7v1h-7zM3 8h1v1h-1zM7 8h1v1h-1zM0 9h11v1h-11zM2 10h1v1h-1zM4 10h1v1h-1zM6 10h1v1h-1zM9 10h1v1h-1zM1 11h1v1h-1zM4 11h1v1h-1zM6 11h1v1h-1zM9 11h1v1h-1zM0 12h1v1h-1zM3 12h2v1h-2zM6 12h4v1h-4z"/><path id="g137" d="M3 2h1v1h-1zM6 2h1v1h-1zM3 3h1v1h-1zM7 3h1v1h-1zM2 4h1v1h-1zM4 4h7v1h-7zM2 5h1v1h-1zM1 6h2v1h-2zM5 6h5v1h-5zM0 7h1v1h-1zM2 7h1v1h-1zM2 8h1v1h-1zM5 8h5v1h-5zM2 9h1v1h-1zM2 10h1v1h-1zM5 10h5v1h-5zM2 11h1v1h-1zM5 11h1v1h-1zM9 11h1v1h-1zM2 12h1v1h-1zM5 12h5v1h-5z"/><path id="g138" d="M6 2h1v1h-1zM1 3h10v1h-10zM1 4h1v1h-1zM3 4h1v1h-1zM10 4h1v1h-1zM0 5h1v1h-1zM4 5h1v1h-1zM6 5h1v1h-1zM9 5h1v1h-1zM2 6h1v1h-1zM6 6h1v1h-1zM3 7h1v1h-1zM6 7h1v1h-1zM1 8h10v1h-10zM6 9h1v1h-1zM5 10h1v1h-1zM7 10h1v1h-1zM4 11h1v1h-1zM8 11h1v1h-1zM1 12h3v1h-3zM9 12h2v1h-2z"/><path id="g139" d="M4 2h1v1h-1zM0 3h11v1h-11zM3 4h1v1h-1zM3 5h6v1h-6zM2 6h2v1h-2zM8 6h1v1h-1zM1 7h1v1h-1zM3 7h6v1h-6zM0 8h1v1h-1zM3 8h1v1h-1zM8 8h1v1h-1zM3 9h6v1h-6zM3 10h1v1h-1zM8 10h1v1h-1zM3 11h1v1h-1zM8 11h1v1h-1zM3 12h1v1h-1zM7 12h2v1h-2z"/><path id="g140" d="M0 2h4v1h-4zM5 2h5v1h-5zM0 3h1v1h-1zM3 3h1v1h-1zM5 3h1v1h-1zM9 3h1v1h-1zM0 4h1v1h-1zM2 4h1v1h-1zM5 4h5v1h-5zM0 5h2v1h-2zM5 5h1v1h-1zM9 5h1v1h-1zM0 6h1v1h-1zM2 6h1v1h-1zM5 6h5v1h-5zM0 7h1v1h-1zM3 7h1v1h-1zM5 7h1v1h-1zM7 7h1v1h-1zM0 8h1v1h-1zM3 8h1v1h-1zM5 8h1v1h-1zM7 8h1v1h-1zM10 8h1v1h-1zM0 9h2v1h-2zM3 9h1v1h-1zM5 9h1v1h-1zM7 9h1v1h-1zM9 9h1v1h-1zM0 10h1v1h-1zM2 10h1v1h-1zM5 10h1v1h-1zM8 10h1v1h-1zM0 11h1v1h-1zM5 11h1v1h-1zM7 11h1v1h-1zM9 11h1v1h-1zM0 12h1v1h-1zM5 12h2v1h-2zM10 12h1v1h-1z"/><path id="g141" d="M7 2h1v1h-1zM3 3h1v1h-1zM7 3h1v1h-1zM3 4h1v1h-1zM8 4h1v1h-1zM2 5h1v1h-1zM8 5h1v1h-1zM2 6h1v1h-1zM5 6h1v1h-1zM9 6h1v1h-1zM1 7h1v1h-1zM5 7h1v1h-1zM10 7h1v1h-1zM0 8h1v1h-1zM4 8h1v1h-1zM4 9h1v1h-1zM7 9h1v1h-1zM3 10h1v1h-1zM8 10h1v1h-1zM2 11h8v1h-8zM3 12h1v1h-1zM9 12h1v1h-1z"/><path id="g142" d="M1 2h9v1h-9zM9 3h1v1h-1zM0 4h8v1h-8zM9 4h1v1h-1zM9 5h1v1h-1zM1 6h6v1h-6zM9 6h1v1h-1zM1 7h1v1h-1zM6 7h1v1h-1zM9 7h1v1h-1zM1 8h1v1h-1zM6 8h1v1h-1zM9 8h1v1h-1zM1 9h6v1h-6zM9 9h1v1h-1zM9 10h1v1h-1zM9 11h1v1h-1zM6 12h3v1h-3z"/><path id="g143" d="M0 7h4v1h-4zM1 8h1v1h-1zM4 8h1v1h-1zM1 9h1v1h-1zM4 9h1v1h-1zM1 10h1v1h-1zM4 10h1v1h-1zM1 11h3v1h-3zM1 12h1v1h-1zM0 13h3v1h-3z"/><path id="g144" d="M5 2h1v1h-1zM5 3h1v1h-1zM9 3h1v1h-1zM2 4h7v1h-7zM5 5h1v1h-1zM7 5h1v1h-1zM0 6h11v1h-11zM4 7h1v1h-1zM3 8h2v1h-2zM7 8h2v1h-2zM2 9h1v1h-1zM4 9h3v1h-3zM0 10h2v1h-2zM4 10h1v1h-1zM9 10h1v1h-1zM4 11h1v1h-1zM9 11h1v1h-1zM5 12h5v1h-5z"/><path id="g145" d="M3 2h1v1h-1zM6 2h1v1h-1zM4 3h1v1h-1zM6 3h1v1h-1zM2 4h1v1h-1zM6 4h1v1h-1zM3 5h1v1h-1zM6 5h1v1h-1zM6 6h1v1h-1zM0 7h11v1h-11zM6 8h1v1h-1zM5 9h1v1h-1zM7 9h1v1h-1zM4 10h1v1h-1zM8 10h1v1h-1zM3 11h1v1h-1zM9 11h1v1h-1zM1 12h2v1h-2zM10 12h1v1h-1z"/><path id="g146" d="M6 2h1v1h-1zM6 3h1v1h-1zM2 4h9v1h-9zM2 5h1v1h-1zM6 5h1v1h-1zM9 5h1v1h-1zM2 6h1v1h-1zM6 6h1v1h-1zM2 7h7v1h-7zM2 8h1v1h-1zM4 8h1v1h-1zM8 8h1v1h-1zM2 9h1v1h-1zM5 9h1v1h-1zM7 9h1v1h-1zM2 10h1v1h-1zM6 10h1v1h-1zM1 11h1v1h-1zM5 11h1v1h-1zM7 11h1v1h-1zM0 12h1v1h-1zM3 12h2v1h-2zM8 12h3v1h-3z"/><path id="g147" d="M2 2h7v1h-7zM2 3h1v1h-1zM8 3h1v1h-1zM2 4h7v1h-7zM2 5h1v1h-1zM8 5h1v1h-1zM2 6h7v1h-7zM2 7h1v1h-1zM8 7h1v1h-1zM2 8h7v1h-7zM2 9h1v1h-1zM8 9h1v1h-1zM0 10h11v1h-11zM3 11h1v1h-1zM7 11h1v1h-1zM0 12h3v1h-3zM8 12h3v1h-3z"/><path id="g148" d="M0 7h5v1h-5zM0 8h1v1h-1zM2 8h1v1h-1zM4 8h1v1h-1zM0 9h1v1h-1zM2 9h1v1h-1zM4 9h1v1h-1zM0 10h1v1h-1zM2 10h1v1h-1zM4 10h1v1h-1zM0 11h1v1h-1zM2 11h1v1h-1zM4 11h1v1h-1z"/><path id="g149" d="M5 2h1v1h-1zM6 3h1v1h-1zM1 4h10v1h-10zM1 5h1v1h-1zM1 6h1v1h-1zM1 7h1v1h-1zM1 8h1v1h-1zM1 9h1v1h-1zM1 10h1v1h-1zM0 11h1v1h-1zM0 12h1v1h-1z"/><path id="g150" d="M3 2h1v1h-1zM10 2h1v1h-1zM3 3h1v1h-1zM6 3h1v1h-1zM10 3h1v1h-1zM3 4h1v1h-1zM6 4h1v1h-1zM10 4h1v1h-1zM1 5h1v1h-1zM3 5h2v1h-2zM6 5h2v1h-2zM10 5h1v1h-1zM1 6h1v1h-1zM3 6h1v1h-1zM5 6h2v1h-2zM8 6h1v1h-1zM10 6h1v1h-1zM0 7h1v1h-1zM3 7h1v1h-1zM6 7h1v1h-1zM8 7h1v1h-1zM10 7h1v1h-1zM3 8h1v1h-1zM6 8h1v1h-1zM10 8h1v1h-1zM3 9h1v1h-1zM6 9h1v1h-1zM10 9h1v1h-1zM3 10h1v1h-1zM6 10h1v1h-1zM10 10h1v1h-1zM2 11h1v1h-1zM6 11h1v1h-1zM10 11h1v1h-1zM1 12h1v1h-1zM10 12h1v1h-1z"/><path id="g151" d="M2 2h1v1h-1zM6 2h1v1h-1zM2 3h1v1h-1zM7 3h1v1h-1zM0 4h11v1h-11zM2 5h1v1h-1zM2 6h1v1h-1zM9 6h1v1h-1zM2 7h2v1h-2zM5 7h1v1h-1zM9 7h1v1h-1zM1 8h2v1h-2zM6 8h1v1h-1zM9 8h1v1h-1zM0 9h1v1h-1zM2 9h1v1h-1zM6 9h1v1h-1zM8 9h1v1h-1zM2 10h1v1h-1zM8 10h1v1h-1zM2 11h1v1h-1zM7 11h1v1h-1zM0 12h3v1h-3zM4 12h7v1h-7z"/><path id="g152" d="M3 2h1v1h-1zM7 2h1v1h-1zM0 3h11v1h-11zM3 4h1v1h-1zM7 4h1v1h-1zM4 5h1v1h-1zM6 5h1v1h-1zM1 6h4v1h-4zM6 6h4v1h-4zM4 7h1v1h-1zM6 7h1v1h-1zM1 8h4v1h-4zM6 8h4v1h-4zM4 9h1v1h-1zM6 9h1v1h-1zM0 10h5v1h-5zM6 10h5v1h-5zM4 11h1v1h-1zM6 11h1v1h-1zM4 12h1v1h-1zM6 12h1v1h-1z"/><path id="g153" d="M6 2h4v1h-4zM0 3h5v1h-5zM9 3h1v1h-1zM2 4h1v1h-1zM6 4h1v1h-1zM9 4h1v1h-1zM2 5h1v1h-1zM6 5h1v1h-1zM9 5h1v1h-1zM1 6h3v1h-3zM6 6h1v1h-1zM9 6h1v1h-1zM2 7h1v1h-1zM6 7h5v1h-5zM2 8h1v1h-1zM10 8h1v1h-1zM2 9h2v1h-2zM5 9h4v1h-4zM10 9h1v1h-1zM0 10h2v1h-2zM10 10h1v1h-1zM7 11h1v1h-1zM10 11h1v1h-1zM8 12h2v1h-2z"/><path id="g154" d="M3 2h1v1h-1zM7 2h1v1h-1zM3 3h1v1h-1zM7 3h1v1h-1zM2 4h1v1h-1zM7 4h1v1h-1zM2 5h1v1h-1zM7 5h1v1h-1zM1 6h2v1h-2zM4 6h7v1h-7zM0 7h1v1h-1zM2 7h1v1h-1zM7 7h1v1h-1zM2 8h1v1h-1zM7 8h1v1h-1zM2 9h1v1h-1zM7 9h1v1h-1zM2 10h1v1h-1zM7 10h1v1h-1zM2 11h1v1h-1zM7 11h1v1h-1zM2 12h1v1h-1zM5 12h5v1h-5z"/><path id="g155" d="M5 2h1v1h-1zM8 2h1v1h-1zM0 3h4v1h-4zM5 3h1v1h-1zM8 3h1v1h-1zM2 4h1v1h-1zM4 4h7v1h-7zM2 5h1v1h-1zM5 5h1v1h-1zM8 5h1v1h-1zM0 6h4v1h-4zM5 6h1v1h-1zM8 6h1v1h-1zM2 7h1v1h-1zM4 7h3v1h-3zM8 7h2v1h-2zM2 8h2v1h-2zM5 8h1v1h-1zM7 8h2v1h-2zM10 8h1v1h-1zM2 9h1v1h-1zM5 9h2v1h-2zM8 9h1v1h-1zM10 9h1v1h-1zM2 10h2v1h-2zM5 10h1v1h-1zM8 10h1v1h-1zM0 11h2v1h-2zM5 11h1v1h-1zM8 11h1v1h-1zM5 12h1v1h-1zM8 12h1v1h-1z"/><path id="g156" d="M1 2h1v1h-1zM4 2h7v1h-7zM2 3h1v1h-1zM6 3h1v1h-1zM8 3h1v1h-1zM0 4h1v1h-1zM6 4h1v1h-1zM8 4h1v1h-1zM1 5h1v1h-1zM3 5h8v1h-8zM2 6h1v1h-1zM4 6h1v1h-1zM6 6h1v1h-1zM8 6h1v1h-1zM10 6h1v1h-1zM2 7h1v1h-1zM4 7h2v1h-2zM8 7h3v1h-3zM2 8h1v1h-1zM4 8h1v1h-1zM10 8h1v1h-1zM0 9h2v1h-2zM4 9h7v1h-7zM1 10h1v1h-1zM4 10h1v1h-1zM10 10h1v1h-1zM1 11h1v1h-1zM4 11h7v1h-7zM1 12h1v1h-1zM4 12h1v1h-1zM10 12h1v1h-1z"/><path id="g157" d="M6 2h1v1h-1zM2 3h9v1h-9zM2 4h1v1h-1zM2 5h1v1h-1zM6 5h1v1h-1zM2 6h1v1h-1zM6 6h1v1h-1zM2 7h1v1h-1zM4 7h6v1h-6zM2 8h1v1h-1zM6 8h1v1h-1zM2 9h1v1h-1zM6 9h1v1h-1zM2 10h1v1h-1zM6 10h1v1h-1zM1 11h1v1h-1zM6 11h1v1h-1zM0 12h1v1h-1zM3 12h8v1h-8z"/></defs><g fill="#dfe8f8"><use href="#g0" x="26" y="6"/><use href="#g1" x="40" y="6"/><use href="#g2" x="54" y="6"/><use href="#g3" x="68" y="6"/><use href="#g4" x="82" y="6"/></g><g fill="#0050ee"><use href="#g5" x="10" y="34"/><use href="#g6" x="22" y="34"/><use href="#g7" x="34" y="34"/><use href="#g8" x="46" y="34"/><use href="#g9" x="58" y="34"/><use href="#g10" x="70" y="34"/><use href="#g11" x="116" y="33"/><use href="#g12" x="128" y="33"/><use href="#g13" x="140" y="33"/><use href="#g14" x="152" y="33"/><use href="#g15" x="164" y="33"/><use href="#g16" x="176" y="33"/></g><g fill="#ffffff"><use href="#g17" x="44" y="56"/><use href="#g18" x="56" y="56"/><use href="#g19" x="68" y="56"/><use href="#g20" x="80" y="56"/></g><g fill="#800000"><use href="#g21" x="28" y="330"/><use href="#g22" x="40" y="330"/><use href="#g23" x="52" y="330"/><use href="#g24" x="64" y="330"/><use href="#g25" x="76" y="330"/><use href="#g26" x="88" y="330"/><use href="#g27" x="100" y="330"/><use href="#g28" x="112" y="330"/><use href="#g8" x="124" y="330"/></g><g fill="#000"><use href="#g26" x="12" y="353"/><use href="#g27" x="24" y="353"/><use href="#g29" x="54" y="355"/><use href="#g30" x="66" y="355"/><use href="#g31" x="96" y="355"/><use href="#g32" x="108" y="355"/><use href="#g33" x="26" y="379"/><use href="#g14" x="38" y="379"/><use href="#g34" x="50" y="379"/><use href="#g35" x="62" y="379"/><use href="#g36" x="26" y="401"/><use href="#g37" x="38" y="401"/><use href="#g38" x="50" y="401"/><use href="#g39" x="62" y="401"/><use href="#g19" x="25" y="423"/><use href="#g20" x="37" y="423"/><use href="#g40" x="49" y="423"/><use href="#g41" x="61" y="423"/><use href="#g42" x="73" y="423"/><use href="#g43" x="27" y="445"/><use href="#g44" x="39" y="445"/><use href="#g41" x="51" y="445"/><use href="#g42" x="63" y="445"/><use href="#g19" x="27" y="468"/><use href="#g20" x="39" y="468"/><use href="#g40" x="51" y="468"/><use href="#g45" x="63" y="468"/><use href="#g46" x="75" y="468"/><use href="#g47" x="27" y="490"/><use href="#g48" x="39" y="490"/><use href="#g49" x="51" y="490"/><use href="#g50" x="63" y="490"/><use href="#g55" x="224" y="59"/><use href="#g25" x="236" y="59"/><use href="#g19" x="248" y="59"/><use href="#g20" x="260" y="59"/><use href="#g56" x="272" y="59"/><use href="#g57" x="509" y="46"/><use href="#g58" x="521" y="46"/><use href="#g59" x="548" y="42"/><use href="#g60" x="560" y="42"/><use href="#g61" x="572" y="42"/><use href="#g28" x="584" y="42"/><use href="#g8" x="596" y="42"/><use href="#g19" x="643" y="43"/><use href="#g20" x="655" y="43"/><use href="#g40" x="667" y="43"/><use href="#g60" x="679" y="43"/><use href="#g61" x="691" y="43"/><use href="#g62" x="757" y="43"/><use href="#g60" x="769" y="43"/><use href="#g76" x="306" y="120"/><use href="#g77" x="312" y="120"/><use href="#g77" x="318" y="120"/><use href="#g76" x="324" y="120"/><use href="#g78" x="407" y="120"/><use href="#g79" x="413" y="120"/><use href="#g80" x="419" y="120"/><use href="#g81" x="425" y="120"/><use href="#g79" x="431" y="120"/><use href="#g82" x="437" y="120"/><use href="#g83" x="443" y="120"/><use href="#g84" x="494" y="120"/><use href="#g85" x="506" y="120"/><use href="#g17" x="518" y="120"/><use href="#g18" x="530" y="120"/><use href="#g19" x="542" y="120"/><use href="#g20" x="554" y="120"/><use href="#g40" x="566" y="120"/><use href="#g86" x="731" y="120"/><use href="#g76" x="306" y="145"/><use href="#g77" x="312" y="145"/><use href="#g77" x="318" y="145"/><use href="#g87" x="324" y="145"/><use href="#g88" x="407" y="145"/><use href="#g89" x="413" y="145"/><use href="#g90" x="419" y="145"/><use href="#g91" x="425" y="145"/><use href="#g92" x="494" y="145"/><use href="#g93" x="506" y="145"/><use href="#g94" x="518" y="145"/><use href="#g95" x="530" y="145"/><use href="#g76" x="306" y="170"/><use href="#g77" x="312" y="170"/><use href="#g77" x="318" y="170"/><use href="#g96" x="324" y="170"/><use href="#g97" x="407" y="170"/><use href="#g78" x="413" y="170"/><use href="#g91" x="419" y="170"/><use href="#g98" x="494" y="170"/><use href="#g99" x="506" y="170"/><use href="#g100" x="518" y="170"/><use href="#g76" x="306" y="195"/><use href="#g77" x="312" y="195"/><use href="#g77" x="318" y="195"/><use href="#g101" x="324" y="195"/><use href="#g96" x="407" y="195"/><use href="#g102" x="413" y="195"/><use href="#g103" x="419" y="195"/><use href="#g78" x="425" y="195"/><use href="#g97" x="431" y="195"/><use href="#g90" x="437" y="195"/><use href="#g91" x="443" y="195"/><use href="#g96" x="494" y="195"/><use href="#g102" x="500" y="195"/><use href="#g104" x="506" y="195"/><use href="#g84" x="518" y="195"/><use href="#g105" x="530" y="195"/><use href="#g94" x="542" y="195"/><use href="#g95" x="554" y="195"/><use href="#g76" x="306" y="220"/><use href="#g77" x="312" y="220"/><use href="#g77" x="318" y="220"/><use href="#g106" x="324" y="220"/><use href="#g107" x="407" y="220"/><use href="#g83" x="413" y="220"/><use href="#g83" x="419" y="220"/><use href="#g108" x="494" y="220"/><use href="#g10" x="506" y="220"/><use href="#g109" x="518" y="220"/><use href="#g76" x="306" y="245"/><use href="#g77" x="312" y="245"/><use href="#g77" x="318" y="245"/><use href="#g110" x="324" y="245"/><use href="#g103" x="407" y="245"/><use href="#g97" x="413" y="245"/><use href="#g103" x="419" y="245"/><use href="#g111" x="425" y="245"/><use href="#g112" x="494" y="245"/><use href="#g113" x="506" y="245"/><use href="#g114" x="518" y="245"/><use href="#g115" x="530" y="245"/><use href="#g76" x="306" y="270"/><use href="#g77" x="312" y="270"/><use href="#g77" x="318" y="270"/><use href="#g102" x="324" y="270"/><use href="#g82" x="407" y="270"/><use href="#g97" x="413" y="270"/><use href="#g81" x="419" y="270"/><use href="#g116" x="494" y="270"/><use href="#g74" x="506" y="270"/><use href="#g117" x="518" y="270"/><use href="#g76" x="306" y="295"/><use href="#g77" x="312" y="295"/><use href="#g77" x="318" y="295"/><use href="#g118" x="324" y="295"/><use href="#g81" x="407" y="295"/><use href="#g119" x="413" y="295"/><use href="#g97" x="419" y="295"/><use href="#g83" x="425" y="295"/><use href="#g120" x="494" y="295"/><use href="#g121" x="506" y="295"/><use href="#g122" x="518" y="295"/><use href="#g123" x="530" y="295"/><use href="#g76" x="306" y="320"/><use href="#g77" x="312" y="320"/><use href="#g77" x="318" y="320"/><use href="#g124" x="324" y="320"/><use href="#g80" x="407" y="320"/><use href="#g103" x="413" y="320"/><use href="#g125" x="419" y="320"/><use href="#g126" x="494" y="320"/><use href="#g127" x="506" y="320"/><use href="#g128" x="518" y="320"/><use href="#g76" x="306" y="345"/><use href="#g77" x="312" y="345"/><use href="#g76" x="318" y="345"/><use href="#g77" x="324" y="345"/><use href="#g107" x="407" y="345"/><use href="#g103" x="413" y="345"/><use href="#g82" x="419" y="345"/><use href="#g88" x="425" y="345"/><use href="#g129" x="494" y="345"/><use href="#g130" x="506" y="345"/><use href="#g131" x="518" y="345"/><use href="#g132" x="530" y="345"/><use href="#g76" x="306" y="370"/><use href="#g77" x="312" y="370"/><use href="#g76" x="318" y="370"/><use href="#g76" x="324" y="370"/><use href="#g83" x="407" y="370"/><use href="#g80" x="413" y="370"/><use href="#g82" x="419" y="370"/><use href="#g91" x="425" y="370"/><use href="#g107" x="431" y="370"/><use href="#g83" x="437" y="370"/><use href="#g82" x="443" y="370"/><use href="#g82" x="449" y="370"/><use href="#g107" x="455" y="370"/><use href="#g79" x="461" y="370"/><use href="#g83" x="467" y="370"/><use href="#g133" x="494" y="370"/><use href="#g134" x="506" y="370"/><use href="#g135" x="518" y="370"/><use href="#g136" x="530" y="370"/><use href="#g137" x="542" y="370"/><use href="#g138" x="554" y="370"/><use href="#g16" x="566" y="370"/><use href="#g139" x="578" y="370"/><use href="#g140" x="590" y="370"/><use href="#g141" x="602" y="370"/><use href="#g142" x="614" y="370"/><use href="#g76" x="306" y="395"/><use href="#g77" x="312" y="395"/><use href="#g76" x="318" y="395"/><use href="#g87" x="324" y="395"/><use href="#g97" x="407" y="395"/><use href="#g89" x="413" y="395"/><use href="#g119" x="419" y="395"/><use href="#g143" x="425" y="395"/><use href="#g91" x="431" y="395"/><use href="#g144" x="494" y="395"/><use href="#g75" x="506" y="395"/><use href="#g145" x="518" y="395"/><use href="#g146" x="530" y="395"/><use href="#g147" x="542" y="395"/><use href="#g76" x="306" y="420"/><use href="#g77" x="312" y="420"/><use href="#g76" x="318" y="420"/><use href="#g96" x="324" y="420"/><use href="#g79" x="407" y="420"/><use href="#g80" x="413" y="420"/><use href="#g97" x="419" y="420"/><use href="#g125" x="425" y="420"/><use href="#g148" x="431" y="420"/><use href="#g83" x="437" y="420"/><use href="#g97" x="443" y="420"/><use href="#g91" x="449" y="420"/><use href="#g80" x="455" y="420"/><use href="#g82" x="461" y="420"/><use href="#g107" x="467" y="420"/><use href="#g79" x="473" y="420"/><use href="#g83" x="479" y="420"/><use href="#g149" x="494" y="420"/><use href="#g150" x="506" y="420"/><use href="#g151" x="518" y="420"/><use href="#g152" x="530" y="420"/><use href="#g153" x="542" y="420"/><use href="#g154" x="554" y="420"/><use href="#g155" x="566" y="420"/><use href="#g156" x="578" y="420"/><use href="#g157" x="590" y="420"/><use href="#g139" x="602" y="420"/><use href="#g140" x="614" y="420"/><use href="#g141" x="626" y="420"/><use href="#g142" x="638" y="420"/></g><g fill="#0000ff"><use href="#g51" x="224" y="37"/><use href="#g52" x="236" y="37"/><use href="#g53" x="248" y="37"/><use href="#g54" x="260" y="37"/></g><g fill="#0a0a80"><use href="#g63" x="273" y="95"/><use href="#g64" x="285" y="95"/><use href="#g65" x="340" y="95"/><use href="#g66" x="352" y="95"/><use href="#g67" x="428" y="95"/><use href="#g68" x="440" y="95"/><use href="#g69" x="452" y="95"/><use href="#g70" x="584" y="95"/><use href="#g71" x="596" y="95"/><use href="#g72" x="608" y="95"/><use href="#g73" x="620" y="95"/><use href="#g74" x="749" y="95"/><use href="#g46" x="761" y="95"/><use href="#g75" x="773" y="95"/></g><g fill="#000080"><use href="#g76" x="240" y="120"/><use href="#g87" x="240" y="145"/><use href="#g96" x="240" y="170"/><use href="#g101" x="240" y="195"/><use href="#g106" x="240" y="220"/><use href="#g110" x="240" y="245"/><use href="#g102" x="240" y="270"/><use href="#g118" x="240" y="295"/><use href="#g124" x="240" y="320"/><use href="#g76" x="237" y="345"/><use href="#g77" x="243" y="345"/><use href="#g76" x="237" y="370"/><use href="#g76" x="243" y="370"/><use href="#g76" x="237" y="395"/><use href="#g87" x="243" y="395"/><use href="#g76" x="237" y="420"/><use href="#g96" x="243" y="420"/></g></svg>
</body></html>
